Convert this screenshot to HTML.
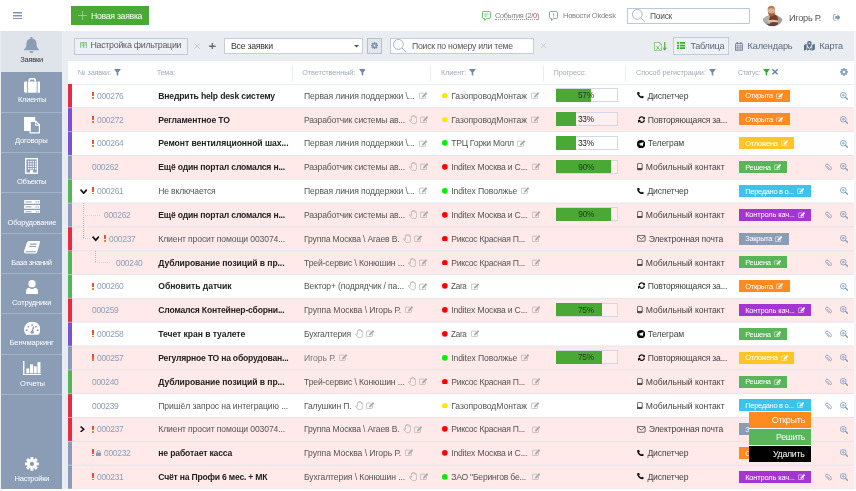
<!DOCTYPE html>
<html lang="ru"><head><meta charset="utf-8"><title>Okdesk — Заявки</title><style>html,body{margin:0;padding:0}body{width:856px;height:491px;overflow:hidden;position:relative;background:#fff;font-family:"Liberation Sans", sans-serif;filter:blur(.3px)}
.b{position:absolute;display:block}.t{position:absolute;white-space:nowrap;display:block;transform-origin:0 50%}</style></head><body>
<div class="b" style="left:0.00px;top:0.00px;width:856.00px;height:31.20px;background:#fff"></div>
<div class="b" style="left:0.00px;top:31.20px;width:856.00px;height:459.80px;background:#e9edf2"></div>
<div class="b" style="left:0.70px;top:31.20px;width:61.30px;height:459.80px;background:#8b9db5"></div>
<div class="b" style="left:0.70px;top:31.20px;width:61.30px;height:40.80px;background:#dfe4eb"></div>
<span class="t" style="left:20.20px;top:55.30px;font-size:7.6px;line-height:10.6px;color:#333;letter-spacing:-0.272px;">Заявки</span>
<svg class="b" style="left:24.40px;top:37.00px;" width="15.00" height="16.10" viewBox="1 0.6 14 15.2" preserveAspectRatio="none"><path d="M8 .6a1 1 0 0 1 1 1v.5c2.300.5 3.700 2.400 3.700 4.900 0 2.700.8 4.300 2.300 5.300v.9H1v-.9c1.500-1 2.300-2.600 2.300-5.300 0-2.500 1.400-4.400 3.700-4.900v-.5a1 1 0 0 1 1-1z" fill="#8b9db5"/><path d="M6.200 14h3.600a1.800 1.800 0 0 1-3.600 0z" fill="#8b9db5"/></svg>
<div class="b" style="left:0.70px;top:111.60px;width:61.30px;height:1.00px;background:#a5b3c7"></div>
<span class="t" style="left:17.50px;top:95.40px;font-size:7.6px;line-height:10.6px;color:#fff;letter-spacing:-0.280px;transform:scaleX(0.9915);">Клиенты</span>
<svg class="b" style="left:23.90px;top:78.00px;" width="16.50" height="14.70" viewBox="0.5 0.2 17 15.3" preserveAspectRatio="none"><path d="M6 3.800V2.300A1.300 1.300 0 0 1 7.300 1h3.400A1.300 1.300 0 0 1 12 2.300V3.800" fill="none" stroke="#fff" stroke-width="1.600"/><path d="M2 3.800H3.500V15.500H2A1.500 1.500 0 0 1 .5 14V5.300A1.500 1.500 0 0 1 2 3.800z" fill="#fff"/><rect x="4.400" y="3.800" width="9.200" height="11.700" fill="#fff"/><path d="M14.500 3.800H16A1.500 1.500 0 0 1 17.500 5.300V14A1.500 1.500 0 0 1 16 15.500H14.500z" fill="#fff"/></svg>
<div class="b" style="left:0.70px;top:151.75px;width:61.30px;height:1.00px;background:#a5b3c7"></div>
<span class="t" style="left:15.00px;top:136.00px;font-size:7.6px;line-height:10.6px;color:#fff;letter-spacing:-0.205px;">Договоры</span>
<svg class="b" style="left:23.90px;top:117.30px;" width="16.10" height="16.60" viewBox="0 0 18 18" preserveAspectRatio="none"><path d="M0 0H12.500V15.200H0z" fill="#fff"/><path d="M6.900 4.600H13.200L17.300 8.700V17.300H6.900z" fill="#8b9db5" stroke="#fff" stroke-width="1.400" stroke-linejoin="round"/><path d="M12.900 4.600V9H17.300" fill="none" stroke="#fff" stroke-width="1.200"/></svg>
<div class="b" style="left:0.70px;top:191.60px;width:61.30px;height:1.00px;background:#a5b3c7"></div>
<span class="t" style="left:17.00px;top:176.50px;font-size:7.6px;line-height:10.6px;color:#fff;letter-spacing:-0.280px;transform:scaleX(0.9960);">Объекты</span>
<svg class="b" style="left:25.20px;top:158.00px;" width="13.20" height="15.90" viewBox="0 0 13 16" preserveAspectRatio="none"><rect x=".7" y=".7" width="11.600" height="14.600" fill="#8b9db5" stroke="#fff" stroke-width="1.400"/><rect x="2.9" y="2.9" width="1.400" height="1.400" fill="#fff"/><rect x="2.9" y="5.3" width="1.400" height="1.400" fill="#fff"/><rect x="2.9" y="7.7" width="1.400" height="1.400" fill="#fff"/><rect x="2.9" y="10.1" width="1.400" height="1.400" fill="#fff"/><rect x="5.2" y="2.9" width="1.400" height="1.400" fill="#fff"/><rect x="5.2" y="5.3" width="1.400" height="1.400" fill="#fff"/><rect x="5.2" y="7.7" width="1.400" height="1.400" fill="#fff"/><rect x="5.2" y="10.1" width="1.400" height="1.400" fill="#fff"/><rect x="7.5" y="2.9" width="1.400" height="1.400" fill="#fff"/><rect x="7.5" y="5.3" width="1.400" height="1.400" fill="#fff"/><rect x="7.5" y="7.7" width="1.400" height="1.400" fill="#fff"/><rect x="7.5" y="10.1" width="1.400" height="1.400" fill="#fff"/><rect x="9.8" y="2.9" width="1.400" height="1.400" fill="#fff"/><rect x="9.8" y="5.3" width="1.400" height="1.400" fill="#fff"/><rect x="9.8" y="7.7" width="1.400" height="1.400" fill="#fff"/><rect x="9.8" y="10.1" width="1.400" height="1.400" fill="#fff"/><rect x="5" y="12.200" width="3" height="3.200" fill="#fff"/></svg>
<div class="b" style="left:0.70px;top:232.60px;width:61.30px;height:1.00px;background:#a5b3c7"></div>
<span class="t" style="left:7.50px;top:217.60px;font-size:7.6px;line-height:10.6px;color:#fff;letter-spacing:-0.242px;">Оборудование</span>
<svg class="b" style="left:23.90px;top:199.50px;" width="16.10" height="13.80" viewBox="0 0 18 15" preserveAspectRatio="none"><rect x="0" y="0.0" width="18" height="4.200" rx=".8" fill="#fff"/><rect x="1.500" y="1.6" width="7" height="1" fill="#8b9db5"/><rect x="13" y="1.4" width="1.300" height="1.300" fill="#8b9db5"/><rect x="15.300" y="1.4" width="1.300" height="1.300" fill="#8b9db5"/><rect x="0" y="5.4" width="18" height="4.200" rx=".8" fill="#fff"/><rect x="1.500" y="7.0" width="7" height="1" fill="#8b9db5"/><rect x="13" y="6.9" width="1.300" height="1.300" fill="#8b9db5"/><rect x="15.300" y="6.9" width="1.300" height="1.300" fill="#8b9db5"/><rect x="0" y="10.8" width="18" height="4.200" rx=".8" fill="#fff"/><rect x="1.500" y="12.4" width="7" height="1" fill="#8b9db5"/><rect x="13" y="12.2" width="1.300" height="1.300" fill="#8b9db5"/><rect x="15.300" y="12.2" width="1.300" height="1.300" fill="#8b9db5"/></svg>
<div class="b" style="left:0.70px;top:272.75px;width:61.30px;height:1.00px;background:#a5b3c7"></div>
<span class="t" style="left:11.25px;top:257.60px;font-size:7.6px;line-height:10.6px;color:#fff;letter-spacing:-0.274px;">База знаний</span>
<svg class="b" style="left:23.90px;top:241.00px;" width="16.10" height="13.60" viewBox="0.5 0.5 17 13.5" preserveAspectRatio="none"><path d="M6 .5H16.300a1.200 1.200 0 0 1 1.100 1.600L14.300 12a1.500 1.500 0 0 1-1.400 1H2.500A2 2 0 0 1 .6 10.400L3.500 2.300A2.600 2.600 0 0 1 6 .5z" fill="#fff"/><path d="M7 3.600h6.800M6.200 6h6.800" stroke="#8b9db5" stroke-width="1.100"/><path d="M2.300 11.200h10.800" stroke="#8b9db5" stroke-width="1"/></svg>
<div class="b" style="left:0.70px;top:312.60px;width:61.30px;height:1.00px;background:#a5b3c7"></div>
<span class="t" style="left:12.00px;top:297.70px;font-size:7.6px;line-height:10.6px;color:#fff;letter-spacing:-0.189px;">Сотрудники</span>
<svg class="b" style="left:25.70px;top:280.00px;" width="12.10" height="14.30" viewBox="0.5 0.3 13 15.2" preserveAspectRatio="none"><circle cx="7" cy="4.200" r="3.900" fill="#fff"/><path d="M.5 15.500V12.500C.5 9.800 2.500 8.600 4 8.600 5 9.500 6 9.800 7 9.800S9 9.500 10 8.600c1.500 0 3.500 1.200 3.500 3.900v3z" fill="#fff"/></svg>
<div class="b" style="left:0.70px;top:353.75px;width:61.30px;height:1.00px;background:#a5b3c7"></div>
<span class="t" style="left:9.50px;top:338.30px;font-size:7.6px;line-height:10.6px;color:#fff;letter-spacing:-0.119px;">Бенчмаркинг</span>
<svg class="b" style="left:23.80px;top:322.00px;" width="16.40" height="12.80" viewBox="0.5 0 17 13.6" preserveAspectRatio="none"><path d="M2.500 13.500A8.500 8.500 0 1 1 15.500 13.500z" fill="#fff"/><circle cx="3.3" cy="8.8" r="1" fill="#8b9db5"/><circle cx="5.0" cy="4.9" r="1" fill="#8b9db5"/><circle cx="9.0" cy="3.1" r="1" fill="#8b9db5"/><circle cx="13.0" cy="4.9" r="1" fill="#8b9db5"/><circle cx="14.7" cy="8.8" r="1" fill="#8b9db5"/><path d="M9 10.800 10.500 4.800" stroke="#8b9db5" stroke-width="1.400"/><circle cx="9" cy="10.800" r="1.700" fill="#8b9db5"/></svg>
<div class="b" style="left:0.70px;top:393.90px;width:61.30px;height:1.00px;background:#a5b3c7"></div>
<span class="t" style="left:20.00px;top:378.70px;font-size:7.6px;line-height:10.6px;color:#fff;letter-spacing:-0.280px;">Отчеты</span>
<svg class="b" style="left:22.60px;top:360.80px;" width="18.60" height="14.40" viewBox="0 0 18 15" preserveAspectRatio="none"><path d="M.7 0V14.200H18" fill="none" stroke="#fff" stroke-width="1.400"/><rect x="3.200" y="7.800" width="2.900" height="5" fill="#fff"/><rect x="6.800" y="3.500" width="2.900" height="9.300" fill="#fff"/><rect x="10.400" y="5.500" width="2.900" height="7.300" fill="#fff"/><rect x="14" y="1.200" width="2.900" height="11.600" fill="#fff"/></svg>
<svg class="b" style="left:25.00px;top:457.00px;" width="13.80" height="13.80" viewBox="0 0 16 16" preserveAspectRatio="none"><rect x="6.300" y="0" width="3.400" height="16" rx=".6" fill="#fff" transform="rotate(0 8 8)"/><rect x="6.300" y="0" width="3.400" height="16" rx=".6" fill="#fff" transform="rotate(45 8 8)"/><rect x="6.300" y="0" width="3.400" height="16" rx=".6" fill="#fff" transform="rotate(90 8 8)"/><rect x="6.300" y="0" width="3.400" height="16" rx=".6" fill="#fff" transform="rotate(135 8 8)"/><circle cx="8" cy="8" r="5.700" fill="#fff"/><circle cx="8" cy="8" r="2.500" fill="#8b9db5"/></svg>
<span class="t" style="left:14.50px;top:474.40px;font-size:7.6px;line-height:10.6px;color:#fff;letter-spacing:-0.278px;">Настройки</span>
<svg class="b" style="left:13.10px;top:11.70px;" width="9.30" height="7.50" viewBox="0 0 9 7" preserveAspectRatio="none"><path d="M0 .8H9M0 3.500H9M0 6.200H9" stroke="#8395ae" stroke-width="1.400"/></svg>
<div class="b" style="left:71.20px;top:5.60px;width:77.60px;height:19.10px;background:#4aa934"></div>
<svg class="b" style="left:78.00px;top:10.70px;" width="9.00" height="9.00" viewBox="0 0 10 10" preserveAspectRatio="none"><path d="M5 0V10M0 5H10" stroke="#b9e3ad" stroke-width=".7"/></svg>
<span class="t" style="left:91.00px;top:9.70px;font-size:8.7px;line-height:12.2px;color:#fff;letter-spacing:-0.280px;">Новая заявка</span>
<svg class="b" style="left:481.00px;top:11.00px;" width="11.00" height="10.00" viewBox="0 0 11 10" preserveAspectRatio="none"><path d="M2.500 .5H8.500a1 1 0 0 1 1 1V6.500a1 1 0 0 1-1 1H5.700L3.500 9.500V7.500H2.500a1 1 0 0 1-1-1V1.500a1 1 0 0 1 1-1z" fill="none" stroke="#6fc272" stroke-width="1"/><path d="M3.300 3H7.700M3.300 5H6.500" stroke="#6fc272" stroke-width=".9"/></svg>
<span class="t" style="left:495.30px;top:10.90px;font-size:7.6px;line-height:10.6px;color:#808080;letter-spacing:-0.280px;transform:scaleX(0.9702);">События (2/<span style="color:#e33">0</span>)</span>
<div class="b" style="left:495.30px;top:19.00px;width:44.10px;height:1.00px;border-top:1px dotted #999;height:0"></div>
<svg class="b" style="left:548.00px;top:11.00px;" width="11.00" height="10.00" viewBox="0 0 11 10" preserveAspectRatio="none"><path d="M2.500 .5H8.500a1 1 0 0 1 1 1V6.500a1 1 0 0 1-1 1H5.700L3.500 9.500V7.500H2.500a1 1 0 0 1-1-1V1.500a1 1 0 0 1 1-1z" fill="none" stroke="#8da2c0" stroke-width="1"/><path d="M5.500 2.200V4.700M5.500 5.500V6.400" stroke="#8da2c0" stroke-width="1.100"/></svg>
<span class="t" style="left:562.70px;top:10.90px;font-size:7.6px;line-height:10.6px;color:#808080;letter-spacing:-0.280px;transform:scaleX(0.9863);">Новости Okdesk</span>
<div class="b" style="left:627.20px;top:7.50px;width:122.80px;height:16.80px;background:#fff;border:1px solid #b9c9dc;box-sizing:border-box"></div>
<svg class="b" style="left:631.60px;top:8.50px;" width="13.70" height="13.70" viewBox="0.5 0.5 15.4 15.4" preserveAspectRatio="none"><circle cx="6.500" cy="6.500" r="5.500" fill="none" stroke="#8b9db5" stroke-width="0.85"/><path d="M10.500 10.500 15.500 15.500" stroke="#8b9db5" stroke-width="0.85"/></svg>
<span class="t" style="left:650.00px;top:10.20px;font-size:8.6px;line-height:12.0px;color:#555;letter-spacing:-0.280px;transform:scaleX(0.9809);">Поиск</span>
<svg class="b" style="left:761.90px;top:5.30px;" width="21.40" height="21.30" viewBox="0 0 21.4 21.3" preserveAspectRatio="none"><clipPath id="av"><circle cx="10.700" cy="10.650" r="10.650"/></clipPath><g clip-path="url(#av)"><rect width="21.400" height="21.300" fill="#fff"/><ellipse cx="10.600" cy="17" rx="10.600" ry="7.200" fill="#a39c9a"/><path d="M1 14C4 11.500 6.500 10.800 8 10.500L7 16 2 17z" fill="#b5afad"/><ellipse cx="11.600" cy="14.700" rx="4.400" ry="5.700" fill="#7d3b2b"/><ellipse cx="10.600" cy="16.300" rx="5.600" ry="1.500" fill="#e2bfa9"/><ellipse cx="12" cy="18.800" rx="4" ry="1.800" fill="#7d3b2b"/><ellipse cx="8.500" cy="20" rx="5" ry="1.100" fill="#4a4a50"/><ellipse cx="9.400" cy="5.400" rx="3.800" ry="4.700" fill="#deb091"/><path d="M5.600 4.800C5.300 -.6 13.300 -.6 13.200 4.800 11.800 2.800 7.300 2.800 5.600 4.800z" fill="#b48058"/><path d="M5.900 6.800C6.300 13 12.700 13 13 6.800 11.800 9 7.300 9 5.900 6.800z" fill="#a3623f"/></g></svg>
<span class="t" style="left:789.40px;top:11.10px;font-size:9.4px;line-height:13.2px;color:#555;letter-spacing:-0.280px;transform:scaleX(0.9813);">Игорь Р.</span>
<svg class="b" style="left:832.60px;top:14.00px;" width="7.60" height="6.80" viewBox="0 0 16 14" preserveAspectRatio="none"><path d="M6 1H3.500A2.500 2.500 0 0 0 1 3.500V10.500A2.500 2.500 0 0 0 3.500 13H6" fill="none" stroke="#7f9abb" stroke-width="2.200" opacity=".75"/><path d="M9.300 .8 16 7 9.300 13.200V9.700H4.800V4.300H9.300z" fill="#7f9abb"/></svg>
<div class="b" style="left:74.10px;top:37.80px;width:113.70px;height:16.90px;background:#edf0f4;border:1px solid #c0cad8;box-sizing:border-box"></div>
<svg class="b" style="left:80.00px;top:41.50px;" width="7.00" height="6.70" viewBox="0 0 10 10" preserveAspectRatio="none"><rect x=".6" y=".6" width="8.800" height="8.800" rx="1" fill="none" stroke="#6cc070" stroke-width="1.200"/><path d="M5 2.500V8.500M2 5.500H8M1 2.800H9" stroke="#6cc070" stroke-width="1.100"/></svg>
<span class="t" style="left:90.40px;top:39.45px;font-size:8.9px;line-height:12.5px;color:#606060;letter-spacing:-0.280px;">Настройка фильтрации</span>
<svg class="b" style="left:194.00px;top:43.00px;" width="6.20" height="6.20" viewBox="0.5 0.5 9 9" preserveAspectRatio="none"><path d="M1 1 9 9M9 1 1 9" stroke="#b5bfcc" stroke-width="1.1"/></svg>
<svg class="b" style="left:209.00px;top:42.90px;" width="6.60" height="6.50" viewBox="0 0 10 10" preserveAspectRatio="none"><path d="M5 0V10M0 5H10" stroke="#6a6a6a" stroke-width="2"/></svg>
<div class="b" style="left:224.00px;top:37.50px;width:139.30px;height:16.80px;background:#fff;border:1px solid #c3cedc;box-sizing:border-box"></div>
<span class="t" style="left:231.00px;top:39.85px;font-size:8.8px;line-height:12.3px;color:#333;letter-spacing:-0.280px;transform:scaleX(0.9956);">Все заявки</span>
<svg class="b" style="left:353.50px;top:45.00px;" width="5.00" height="2.50" viewBox="0 0 10 5" preserveAspectRatio="none"><path d="M0 0H10L5 5z" fill="#555"/></svg>
<div class="b" style="left:366.70px;top:37.50px;width:15.80px;height:16.80px;background:#e2e7ee;border:1px solid #b3c0d0;box-sizing:border-box"></div>
<svg class="b" style="left:370.90px;top:42.20px;" width="7.10" height="7.10" viewBox="0 0 16 16" preserveAspectRatio="none"><rect x="6.300" y="0" width="3.400" height="16" rx=".6" fill="#8093ad" transform="rotate(0 8 8)"/><rect x="6.300" y="0" width="3.400" height="16" rx=".6" fill="#8093ad" transform="rotate(45 8 8)"/><rect x="6.300" y="0" width="3.400" height="16" rx=".6" fill="#8093ad" transform="rotate(90 8 8)"/><rect x="6.300" y="0" width="3.400" height="16" rx=".6" fill="#8093ad" transform="rotate(135 8 8)"/><circle cx="8" cy="8" r="5.700" fill="#8093ad"/><circle cx="8" cy="8" r="2.500" fill="#e2e7ee"/></svg>
<div class="b" style="left:389.70px;top:37.50px;width:144.60px;height:16.80px;background:#fff;border:1px solid #c3cedc;box-sizing:border-box"></div>
<svg class="b" style="left:392.70px;top:39.00px;" width="13.80" height="13.80" viewBox="0.5 0.5 15.4 15.4" preserveAspectRatio="none"><circle cx="6.500" cy="6.500" r="5.500" fill="none" stroke="#8b9db5" stroke-width="0.85"/><path d="M10.500 10.500 15.500 15.500" stroke="#8b9db5" stroke-width="0.85"/></svg>
<span class="t" style="left:411.50px;top:39.85px;font-size:8.8px;line-height:12.3px;color:#555;letter-spacing:-0.280px;transform:scaleX(0.9906);">Поиск по номеру или теме</span>
<svg class="b" style="left:540.50px;top:43.30px;" width="5.20" height="5.20" viewBox="0.5 0.5 9 9" preserveAspectRatio="none"><path d="M1 1 9 9M9 1 1 9" stroke="#b5bfcc" stroke-width="1.1"/></svg>
<svg class="b" style="left:654.00px;top:41.50px;" width="13.00" height="9.10" viewBox="0 0 26 20" preserveAspectRatio="none"><path d="M1 1H11L15 5V19H1z" fill="#fff" stroke="#55b544" stroke-width="1.400"/><path d="M11 1V5H15" fill="none" stroke="#55b544" stroke-width="1.200"/><path d="M4.500 8 11 17M11 8 4.500 17" stroke="#55b544" stroke-width="1.800"/><path d="M21.500 0V14" stroke="#55b544" stroke-width="2.600"/><path d="M17 12.500H26L21.500 19.500z" fill="#55b544"/></svg>
<div class="b" style="left:673.10px;top:37.30px;width:55.90px;height:18.10px;background:#edf0f4;border:1px solid #c3cdd9;box-sizing:border-box"></div>
<svg class="b" style="left:676.60px;top:42.20px;" width="8.90" height="7.20" viewBox="0 0 12 10" preserveAspectRatio="none"><path d="M0 1.300H2.700M0 5H2.700M0 8.700H2.700M3.800 1.300H12M3.800 5H12M3.800 8.700H12" stroke="#3cb02c" stroke-width="2.500"/></svg>
<span class="t" style="left:690.40px;top:39.85px;font-size:9.1px;line-height:12.7px;color:#5a6a80;letter-spacing:-0.265px;">Таблица</span>
<svg class="b" style="left:735.00px;top:41.70px;" width="8.00" height="9.30" viewBox="0 0 14 15" preserveAspectRatio="none"><rect x=".8" y="2.500" width="12.400" height="11.700" rx="1" fill="none" stroke="#6d7f96" stroke-width="1.500"/><path d="M.8 5.800H13.200M4.800 5.800V14M9.200 5.800V14M1 8.600H13M1 11.400H13" stroke="#6d7f96" stroke-width="1"/><path d="M4 0V3.800M10 0V3.800" stroke="#6d7f96" stroke-width="2"/></svg>
<span class="t" style="left:747.50px;top:39.75px;font-size:9.2px;line-height:12.9px;color:#5a6a80;letter-spacing:-0.153px;">Календарь</span>
<svg class="b" style="left:804.20px;top:41.30px;" width="10.80" height="9.70" viewBox="0 0 18 15" preserveAspectRatio="none"><path d="M0 6 4.300 4.300V13.300L0 15z" fill="#566b85"/><path d="M13.700 6 18 4.300V13.300L13.700 15z" fill="#566b85"/><path d="M5.200 8.500 6.500 11.800H11.500L12.800 8.500V15L9 13.300 5.200 15z" fill="#566b85"/><path d="M9 0A3.800 3.800 0 0 1 12.800 3.800C12.800 6.500 9 11 9 11S5.200 6.500 5.200 3.800A3.800 3.800 0 0 1 9 0z" fill="#566b85"/><circle cx="9" cy="3.800" r="1.400" fill="#e9edf2"/></svg>
<span class="t" style="left:819.50px;top:39.85px;font-size:9.1px;line-height:12.7px;color:#5a6a80;letter-spacing:-0.219px;">Карта</span>
<div class="b" style="left:854.00px;top:31.20px;width:2.00px;height:459.80px;background:#f3f5f8"></div>
<div class="b" style="left:68.00px;top:61.00px;width:785.50px;height:430.00px;background:#fff"></div>
<span class="t" style="left:78.00px;top:67.60px;font-size:7.3px;line-height:10.2px;color:#a3abb8;letter-spacing:-0.182px;">№ заявки:</span>
<svg class="b" style="left:113.70px;top:68.80px;" width="6.90" height="7.00" viewBox="0.5 1 15 14" preserveAspectRatio="none"><path d="M.5 1H15.500L9.700 7.800V15L6.300 12.500V7.800z" fill="#7088a8"/></svg>
<span class="t" style="left:156.75px;top:67.60px;font-size:7.3px;line-height:10.2px;color:#a3abb8;letter-spacing:-0.244px;">Тема:</span>
<span class="t" style="left:302.25px;top:67.60px;font-size:7.3px;line-height:10.2px;color:#a3abb8;letter-spacing:-0.081px;">Ответственный:</span>
<svg class="b" style="left:358.50px;top:68.80px;" width="6.90" height="7.00" viewBox="0.5 1 15 14" preserveAspectRatio="none"><path d="M.5 1H15.500L9.700 7.800V15L6.300 12.500V7.800z" fill="#7088a8"/></svg>
<span class="t" style="left:441.00px;top:67.60px;font-size:7.3px;line-height:10.2px;color:#a3abb8;letter-spacing:-0.114px;">Клиент:</span>
<svg class="b" style="left:469.20px;top:68.80px;" width="6.90" height="7.00" viewBox="0.5 1 15 14" preserveAspectRatio="none"><path d="M.5 1H15.500L9.700 7.800V15L6.300 12.500V7.800z" fill="#7088a8"/></svg>
<span class="t" style="left:553.50px;top:67.60px;font-size:7.3px;line-height:10.2px;color:#a3abb8;letter-spacing:-0.108px;">Прогресс:</span>
<span class="t" style="left:636.00px;top:67.60px;font-size:7.3px;line-height:10.2px;color:#a3abb8;letter-spacing:-0.097px;">Способ регистрации:</span>
<svg class="b" style="left:709.00px;top:68.80px;" width="6.90" height="7.00" viewBox="0.5 1 15 14" preserveAspectRatio="none"><path d="M.5 1H15.500L9.700 7.800V15L6.300 12.500V7.800z" fill="#7088a8"/></svg>
<span class="t" style="left:737.50px;top:67.60px;font-size:7.3px;line-height:10.2px;color:#a3abb8;letter-spacing:-0.280px;transform:scaleX(0.9510);">Статус:</span>
<svg class="b" style="left:763.20px;top:68.50px;" width="6.90" height="7.00" viewBox="0.5 1 15 14" preserveAspectRatio="none"><path d="M.5 1H15.500L9.700 7.800V15L6.300 12.500V7.800z" fill="#3aa33a"/></svg>
<svg class="b" style="left:772.40px;top:69.00px;" width="6.00" height="5.60" viewBox="0.5 0.5 9 9" preserveAspectRatio="none"><path d="M1 1 9 9M9 1 1 9" stroke="#5b84ad" stroke-width="2.1"/></svg>
<svg class="b" style="left:840.00px;top:68.00px;" width="8.00" height="7.80" viewBox="0 0 16 16" preserveAspectRatio="none"><rect x="6.300" y="0" width="3.400" height="16" rx=".6" fill="#8aa1c0" transform="rotate(0 8 8)"/><rect x="6.300" y="0" width="3.400" height="16" rx=".6" fill="#8aa1c0" transform="rotate(45 8 8)"/><rect x="6.300" y="0" width="3.400" height="16" rx=".6" fill="#8aa1c0" transform="rotate(90 8 8)"/><rect x="6.300" y="0" width="3.400" height="16" rx=".6" fill="#8aa1c0" transform="rotate(135 8 8)"/><circle cx="8" cy="8" r="5.700" fill="#8aa1c0"/><circle cx="8" cy="8" r="2.500" fill="#fff"/></svg>
<div class="b" style="left:291.50px;top:64.50px;width:1.00px;height:16.00px;background:#eaedf2"></div>
<div class="b" style="left:430.00px;top:64.50px;width:1.00px;height:16.00px;background:#eaedf2"></div>
<div class="b" style="left:542.50px;top:64.50px;width:1.00px;height:16.00px;background:#eaedf2"></div>
<div class="b" style="left:624.50px;top:64.50px;width:1.00px;height:16.00px;background:#eaedf2"></div>
<div class="b" style="left:68.00px;top:83.50px;width:786.00px;height:0.80px;background:#e9edf2"></div>
<div class="b" style="left:68.00px;top:83.80px;width:4.00px;height:23.83px;background:#e82944"></div>
<div class="b" style="left:92.30px;top:92.00px;width:1.80px;height:4.40px;background:linear-gradient(#f23a2e,#f6602a);border-radius:.3px"></div>
<div class="b" style="left:92.30px;top:97.30px;width:1.80px;height:1.60px;background:#fa7a2c"></div>
<span class="t" style="left:96.60px;top:89.80px;font-size:8.6px;line-height:12.0px;color:#8c9eb7;letter-spacing:-0.280px;transform:scaleX(0.9812);">000276</span>
<span class="t" style="left:158.30px;top:89.80px;font-size:8.6px;line-height:12.0px;color:#222;font-weight:bold;letter-spacing:-0.162px;">Внедрить help desk систему</span>
<span class="t" style="left:304.00px;top:89.80px;font-size:8.6px;line-height:12.0px;color:#555;letter-spacing:-0.112px;">Первая линия поддержки \...</span>
<svg class="b" style="left:419.40px;top:91.90px;" width="8.40" height="7.00" viewBox="0 0.3 17 13.7" preserveAspectRatio="none"><path d="M13 8.500V11.500A1.800 1.800 0 0 1 11.200 13.300H2.500A1.800 1.800 0 0 1 .7 11.500V4.300A1.800 1.800 0 0 1 2.500 2.500H9" fill="none" stroke="#a9a9a9" stroke-width="1.350" stroke-linecap="round"/><path d="M6.500 8 14 .5 16.800 3.300 9.300 10.800 6 11.300z" fill="#a9a9a9"/></svg>
<svg class="b" style="left:442.30px;top:92.75px;" width="5.70" height="5.70" viewBox="0 0 10 10" preserveAspectRatio="none"><circle cx="5" cy="5" r="5" fill="#ffe800"/></svg>
<span class="t" style="left:451.20px;top:89.80px;font-size:8.6px;line-height:12.0px;color:#555;letter-spacing:-0.070px;">ГазопроводМонтаж</span>
<svg class="b" style="left:530.50px;top:91.90px;" width="8.40" height="7.00" viewBox="0 0.3 17 13.7" preserveAspectRatio="none"><path d="M13 8.500V11.500A1.800 1.800 0 0 1 11.200 13.300H2.500A1.800 1.800 0 0 1 .7 11.500V4.300A1.800 1.800 0 0 1 2.500 2.500H9" fill="none" stroke="#a9a9a9" stroke-width="1.350" stroke-linecap="round"/><path d="M6.500 8 14 .5 16.800 3.300 9.300 10.800 6 11.300z" fill="#a9a9a9"/></svg>
<div class="b" style="left:555.50px;top:88.30px;width:62.00px;height:13.80px;background:rgba(255,255,255,.3);border:1px solid #d0dae6;box-sizing:border-box"></div>
<div class="b" style="left:555.60px;top:88.50px;width:35.23px;height:13.40px;background:#4aa934"></div>
<span class="t" style="left:578.45px;top:90.20px;font-size:8.4px;line-height:11.8px;color:#1f3a18;letter-spacing:-0.280px;transform:scaleX(0.9858);">57%</span>
<svg class="b" style="left:637.40px;top:92.20px;" width="6.60" height="6.40" viewBox="1 1 14 14" preserveAspectRatio="none"><path d="M3.200 1.200 5.600 1 7 4.400 5.400 5.800C6.300 7.800 8.200 9.700 10.200 10.600L11.600 9 15 10.400 14.800 12.800C14.600 14.200 13.400 15 12 14.800 6.200 14 2 9.800 1.200 4 1 2.600 1.800 1.400 3.200 1.200z" fill="#111"/></svg>
<span class="t" style="left:647.40px;top:89.80px;font-size:8.6px;line-height:12.0px;color:#444;letter-spacing:-0.127px;">Диспетчер</span>
<div class="b" style="left:738.50px;top:89.60px;width:51.50px;height:12.00px;background:#ff8a1f"></div>
<span class="t" style="left:745.20px;top:91.25px;font-size:7.5px;line-height:10.5px;color:#fff;letter-spacing:-0.270px;">Открыта</span>
<svg class="b" style="left:776.15px;top:92.70px;" width="7.30" height="5.90" viewBox="0 0.3 17 13.7" preserveAspectRatio="none"><path d="M13 8.500V11.500A1.800 1.800 0 0 1 11.200 13.300H2.500A1.800 1.800 0 0 1 .7 11.500V4.300A1.800 1.800 0 0 1 2.500 2.500H9" fill="none" stroke="#fff" stroke-width="1.350" stroke-linecap="round"/><path d="M6.500 8 14 .5 16.800 3.300 9.300 10.800 6 11.300z" fill="#fff"/></svg>
<svg class="b" style="left:839.80px;top:92.00px;" width="8.20" height="7.90" viewBox="0.4 0.4 15.9 15.9" preserveAspectRatio="none"><circle cx="6.800" cy="6.800" r="5.600" fill="none" stroke="#7b99be" stroke-width="1.600"/><path d="M11.200 11.200 15 15" stroke="#7b99be" stroke-width="2.600" stroke-linecap="round"/><path d="M4 6.800H9.600M6.800 4V9.600" stroke="#7b99be" stroke-width="1.500"/></svg>
<div class="b" style="left:72.00px;top:107.63px;width:782.00px;height:23.83px;background:#ffe9e9"></div>
<div class="b" style="left:68.00px;top:107.63px;width:4.00px;height:23.83px;background:#7a52d6"></div>
<div class="b" style="left:92.30px;top:115.83px;width:1.80px;height:4.40px;background:linear-gradient(#f23a2e,#f6602a);border-radius:.3px"></div>
<div class="b" style="left:92.30px;top:121.13px;width:1.80px;height:1.60px;background:#fa7a2c"></div>
<span class="t" style="left:96.60px;top:113.63px;font-size:8.6px;line-height:12.0px;color:#8c9eb7;letter-spacing:-0.280px;transform:scaleX(0.9812);">000272</span>
<span class="t" style="left:158.30px;top:113.63px;font-size:8.6px;line-height:12.0px;color:#222;font-weight:bold;letter-spacing:-0.158px;">Регламентное ТО</span>
<span class="t" style="left:304.00px;top:113.63px;font-size:8.6px;line-height:12.0px;color:#555;letter-spacing:-0.180px;">Разработчик системы ав...</span>
<svg class="b" style="left:408.70px;top:114.63px;" width="8.10" height="9.20" viewBox="0.2 0.2 14.6 16.7" preserveAspectRatio="none"><path d="M4.500 10V3.500a1.200 1.200 0 0 1 2.400 0V2a1.200 1.200 0 0 1 2.400 0v.8a1.200 1.200 0 0 1 2.400 0V4.800a1.200 1.200 0 0 1 2.400 0V11c0 3.300-2 5.200-5 5.200-2.500 0-3.700-1-4.800-3L1 10.200c-.6-1.200.9-2.200 1.800-1z" fill="none" stroke="#a9a9a9" stroke-width="1.250" stroke-linejoin="round"/></svg>
<svg class="b" style="left:419.50px;top:115.73px;" width="8.40" height="7.00" viewBox="0 0.3 17 13.7" preserveAspectRatio="none"><path d="M13 8.500V11.500A1.800 1.800 0 0 1 11.200 13.300H2.500A1.800 1.800 0 0 1 .7 11.500V4.300A1.800 1.800 0 0 1 2.500 2.500H9" fill="none" stroke="#a9a9a9" stroke-width="1.350" stroke-linecap="round"/><path d="M6.500 8 14 .5 16.800 3.300 9.300 10.800 6 11.300z" fill="#a9a9a9"/></svg>
<svg class="b" style="left:442.30px;top:116.58px;" width="5.70" height="5.70" viewBox="0 0 10 10" preserveAspectRatio="none"><circle cx="5" cy="5" r="5" fill="#ffe800"/></svg>
<span class="t" style="left:451.20px;top:113.63px;font-size:8.6px;line-height:12.0px;color:#555;letter-spacing:-0.070px;">ГазопроводМонтаж</span>
<svg class="b" style="left:530.50px;top:115.73px;" width="8.40" height="7.00" viewBox="0 0.3 17 13.7" preserveAspectRatio="none"><path d="M13 8.500V11.500A1.800 1.800 0 0 1 11.200 13.300H2.500A1.800 1.800 0 0 1 .7 11.500V4.300A1.800 1.800 0 0 1 2.500 2.500H9" fill="none" stroke="#a9a9a9" stroke-width="1.350" stroke-linecap="round"/><path d="M6.500 8 14 .5 16.800 3.300 9.300 10.800 6 11.300z" fill="#a9a9a9"/></svg>
<div class="b" style="left:555.50px;top:112.13px;width:62.00px;height:13.80px;background:rgba(255,255,255,.3);border:1px solid #d0dae6;box-sizing:border-box"></div>
<div class="b" style="left:555.60px;top:112.33px;width:20.39px;height:13.40px;background:#4aa934"></div>
<span class="t" style="left:578.30px;top:114.03px;font-size:8.4px;line-height:11.8px;color:#222;letter-spacing:-0.280px;transform:scaleX(0.9858);">33%</span>
<svg class="b" style="left:637.60px;top:115.63px;" width="7.50" height="7.20" viewBox="0 0.8 16 14.4" preserveAspectRatio="none"><path d="M2.420 7.510A5.600 5.600 0 0 1 12.850 5.200" fill="none" stroke="#111" stroke-width="2.500"/><path d="M13.580 8.490A5.600 5.600 0 0 1 3.150 10.800" fill="none" stroke="#111" stroke-width="2.500"/><path d="M16 1V7.400H9.600z" fill="#111"/><path d="M0 15V8.600H6.400z" fill="#111"/></svg>
<span class="t" style="left:647.70px;top:113.63px;font-size:8.6px;line-height:12.0px;color:#444;letter-spacing:-0.209px;">Повторяющаяся за...</span>
<div class="b" style="left:738.50px;top:113.43px;width:51.50px;height:12.00px;background:#ff8a1f"></div>
<span class="t" style="left:745.20px;top:115.08px;font-size:7.5px;line-height:10.5px;color:#fff;letter-spacing:-0.270px;">Открыта</span>
<svg class="b" style="left:776.15px;top:116.53px;" width="7.30" height="5.90" viewBox="0 0.3 17 13.7" preserveAspectRatio="none"><path d="M13 8.500V11.500A1.800 1.800 0 0 1 11.200 13.300H2.500A1.800 1.800 0 0 1 .7 11.500V4.300A1.800 1.800 0 0 1 2.500 2.500H9" fill="none" stroke="#fff" stroke-width="1.350" stroke-linecap="round"/><path d="M6.500 8 14 .5 16.800 3.300 9.300 10.800 6 11.300z" fill="#fff"/></svg>
<svg class="b" style="left:839.80px;top:115.83px;" width="8.20" height="7.90" viewBox="0.4 0.4 15.9 15.9" preserveAspectRatio="none"><circle cx="6.800" cy="6.800" r="5.600" fill="none" stroke="#7b99be" stroke-width="1.600"/><path d="M11.200 11.200 15 15" stroke="#7b99be" stroke-width="2.600" stroke-linecap="round"/><path d="M4 6.800H9.600M6.800 4V9.600" stroke="#7b99be" stroke-width="1.500"/></svg>
<div class="b" style="left:68.00px;top:131.46px;width:4.00px;height:23.83px;background:#7a52d6"></div>
<div class="b" style="left:92.30px;top:139.66px;width:1.80px;height:4.40px;background:linear-gradient(#f23a2e,#f6602a);border-radius:.3px"></div>
<div class="b" style="left:92.30px;top:144.96px;width:1.80px;height:1.60px;background:#fa7a2c"></div>
<span class="t" style="left:96.60px;top:137.46px;font-size:8.6px;line-height:12.0px;color:#8c9eb7;letter-spacing:-0.280px;transform:scaleX(0.9812);">000264</span>
<span class="t" style="left:158.30px;top:137.46px;font-size:8.6px;line-height:12.0px;color:#222;font-weight:bold;letter-spacing:-0.049px;">Ремонт вентиляционной шах...</span>
<span class="t" style="left:304.00px;top:137.46px;font-size:8.6px;line-height:12.0px;color:#555;letter-spacing:-0.112px;">Первая линия поддержки \...</span>
<svg class="b" style="left:419.40px;top:139.56px;" width="8.40" height="7.00" viewBox="0 0.3 17 13.7" preserveAspectRatio="none"><path d="M13 8.500V11.500A1.800 1.800 0 0 1 11.200 13.300H2.500A1.800 1.800 0 0 1 .7 11.500V4.300A1.800 1.800 0 0 1 2.500 2.500H9" fill="none" stroke="#a9a9a9" stroke-width="1.350" stroke-linecap="round"/><path d="M6.500 8 14 .5 16.800 3.300 9.300 10.800 6 11.300z" fill="#a9a9a9"/></svg>
<svg class="b" style="left:442.30px;top:140.41px;" width="5.70" height="5.70" viewBox="0 0 10 10" preserveAspectRatio="none"><circle cx="5" cy="5" r="5" fill="#00ee00"/></svg>
<span class="t" style="left:451.20px;top:137.46px;font-size:8.6px;line-height:12.0px;color:#555;letter-spacing:-0.260px;">ТРЦ Горки Молл</span>
<svg class="b" style="left:517.25px;top:139.56px;" width="8.40" height="7.00" viewBox="0 0.3 17 13.7" preserveAspectRatio="none"><path d="M13 8.500V11.500A1.800 1.800 0 0 1 11.200 13.300H2.500A1.800 1.800 0 0 1 .7 11.500V4.300A1.800 1.800 0 0 1 2.500 2.500H9" fill="none" stroke="#a9a9a9" stroke-width="1.350" stroke-linecap="round"/><path d="M6.500 8 14 .5 16.800 3.300 9.300 10.800 6 11.300z" fill="#a9a9a9"/></svg>
<div class="b" style="left:555.50px;top:135.96px;width:62.00px;height:13.80px;background:rgba(255,255,255,.3);border:1px solid #d0dae6;box-sizing:border-box"></div>
<div class="b" style="left:555.60px;top:136.16px;width:20.39px;height:13.40px;background:#4aa934"></div>
<span class="t" style="left:578.30px;top:137.86px;font-size:8.4px;line-height:11.8px;color:#222;letter-spacing:-0.280px;transform:scaleX(0.9858);">33%</span>
<svg class="b" style="left:637.10px;top:139.66px;" width="8.20" height="8.20" viewBox="0.3 0.3 15.4 15.4" preserveAspectRatio="none"><circle cx="8" cy="8" r="7.700" fill="#0a0a0a"/><path d="M3 7.800 12.500 4 11 12 8.200 10 6.800 11.400 6.600 9z" fill="#fff"/></svg>
<span class="t" style="left:647.70px;top:137.46px;font-size:8.6px;line-height:12.0px;color:#444;letter-spacing:-0.170px;">Телеграм</span>
<div class="b" style="left:738.50px;top:137.26px;width:55.95px;height:12.00px;background:#ffc526"></div>
<span class="t" style="left:745.20px;top:138.91px;font-size:7.5px;line-height:10.5px;color:#fff;letter-spacing:-0.332px;">Отложена</span>
<svg class="b" style="left:780.90px;top:140.36px;" width="7.30" height="5.90" viewBox="0 0.3 17 13.7" preserveAspectRatio="none"><path d="M13 8.500V11.500A1.800 1.800 0 0 1 11.200 13.300H2.500A1.800 1.800 0 0 1 .7 11.500V4.300A1.800 1.800 0 0 1 2.500 2.500H9" fill="none" stroke="#fff" stroke-width="1.350" stroke-linecap="round"/><path d="M6.500 8 14 .5 16.800 3.300 9.300 10.800 6 11.300z" fill="#fff"/></svg>
<svg class="b" style="left:839.80px;top:139.66px;" width="8.20" height="7.90" viewBox="0.4 0.4 15.9 15.9" preserveAspectRatio="none"><circle cx="6.800" cy="6.800" r="5.600" fill="none" stroke="#7b99be" stroke-width="1.600"/><path d="M11.200 11.200 15 15" stroke="#7b99be" stroke-width="2.600" stroke-linecap="round"/><path d="M4 6.800H9.600M6.800 4V9.600" stroke="#7b99be" stroke-width="1.500"/></svg>
<div class="b" style="left:72.00px;top:155.29px;width:782.00px;height:23.83px;background:#ffe9e9"></div>
<div class="b" style="left:68.00px;top:155.29px;width:4.00px;height:23.83px;background:#8b9db5"></div>
<span class="t" style="left:91.75px;top:161.29px;font-size:8.6px;line-height:12.0px;color:#8c9eb7;letter-spacing:-0.280px;transform:scaleX(0.9812);">000262</span>
<span class="t" style="left:158.30px;top:161.29px;font-size:8.6px;line-height:12.0px;color:#222;font-weight:bold;letter-spacing:-0.189px;">Ещё один портал сломался н...</span>
<span class="t" style="left:304.00px;top:161.29px;font-size:8.6px;line-height:12.0px;color:#555;letter-spacing:-0.180px;">Разработчик системы ав...</span>
<svg class="b" style="left:408.70px;top:162.29px;" width="8.10" height="9.20" viewBox="0.2 0.2 14.6 16.7" preserveAspectRatio="none"><path d="M4.500 10V3.500a1.200 1.200 0 0 1 2.400 0V2a1.200 1.200 0 0 1 2.400 0v.8a1.200 1.200 0 0 1 2.400 0V4.800a1.200 1.200 0 0 1 2.400 0V11c0 3.300-2 5.200-5 5.200-2.500 0-3.700-1-4.800-3L1 10.200c-.6-1.200.9-2.200 1.800-1z" fill="none" stroke="#a9a9a9" stroke-width="1.250" stroke-linejoin="round"/></svg>
<svg class="b" style="left:419.50px;top:163.39px;" width="8.40" height="7.00" viewBox="0 0.3 17 13.7" preserveAspectRatio="none"><path d="M13 8.500V11.500A1.800 1.800 0 0 1 11.200 13.300H2.500A1.800 1.800 0 0 1 .7 11.500V4.300A1.800 1.800 0 0 1 2.500 2.500H9" fill="none" stroke="#a9a9a9" stroke-width="1.350" stroke-linecap="round"/><path d="M6.500 8 14 .5 16.800 3.300 9.300 10.800 6 11.300z" fill="#a9a9a9"/></svg>
<svg class="b" style="left:442.30px;top:164.24px;" width="5.70" height="5.70" viewBox="0 0 10 10" preserveAspectRatio="none"><circle cx="5" cy="5" r="5" fill="#ff0000"/></svg>
<span class="t" style="left:451.20px;top:161.29px;font-size:8.6px;line-height:12.0px;color:#555;letter-spacing:-0.188px;">Inditex Москва и С...</span>
<svg class="b" style="left:532.25px;top:163.39px;" width="8.40" height="7.00" viewBox="0 0.3 17 13.7" preserveAspectRatio="none"><path d="M13 8.500V11.500A1.800 1.800 0 0 1 11.200 13.300H2.500A1.800 1.800 0 0 1 .7 11.500V4.300A1.800 1.800 0 0 1 2.500 2.500H9" fill="none" stroke="#a9a9a9" stroke-width="1.350" stroke-linecap="round"/><path d="M6.500 8 14 .5 16.800 3.300 9.300 10.800 6 11.300z" fill="#a9a9a9"/></svg>
<div class="b" style="left:555.50px;top:159.79px;width:62.00px;height:13.80px;background:rgba(255,255,255,.3);border:1px solid #d0dae6;box-sizing:border-box"></div>
<div class="b" style="left:555.60px;top:159.99px;width:55.62px;height:13.40px;background:#4aa934"></div>
<span class="t" style="left:578.30px;top:161.69px;font-size:8.4px;line-height:11.8px;color:#1f3a18;letter-spacing:-0.255px;">90%</span>
<svg class="b" style="left:637.30px;top:163.49px;" width="5.60" height="7.20" viewBox="0.15 0.15 11.7 15.7" preserveAspectRatio="none"><rect x="1" y="1" width="10" height="14" rx="1.800" fill="none" stroke="#3c3c3c" stroke-width="1.700"/><rect x="1" y="11.300" width="10" height="3.700" fill="#3c3c3c"/></svg>
<span class="t" style="left:645.80px;top:161.29px;font-size:8.6px;line-height:12.0px;color:#444;letter-spacing:-0.021px;">Мобильный контакт</span>
<div class="b" style="left:738.50px;top:161.09px;width:48.70px;height:12.00px;background:#58b55a"></div>
<span class="t" style="left:745.20px;top:162.74px;font-size:7.5px;line-height:10.5px;color:#fff;letter-spacing:-0.310px;">Решена</span>
<svg class="b" style="left:773.90px;top:164.19px;" width="7.30" height="5.90" viewBox="0 0.3 17 13.7" preserveAspectRatio="none"><path d="M13 8.500V11.500A1.800 1.800 0 0 1 11.200 13.300H2.500A1.800 1.800 0 0 1 .7 11.500V4.300A1.800 1.800 0 0 1 2.500 2.500H9" fill="none" stroke="#fff" stroke-width="1.350" stroke-linecap="round"/><path d="M6.500 8 14 .5 16.800 3.300 9.300 10.800 6 11.300z" fill="#fff"/></svg>
<svg class="b" style="left:824.80px;top:163.29px;" width="7.40" height="7.60" viewBox="0 0 15 15" preserveAspectRatio="none"><path d="M4.300 6.800 9.900 12.400a2.100 2.100 0 0 0 3-3L6.300 2.800a3.050 3.050 0 0 0-4.300 4.300l6.700 6.700" fill="none" stroke="#7f94b3" stroke-width="1.650" stroke-linecap="round"/></svg>
<svg class="b" style="left:839.80px;top:163.49px;" width="8.20" height="7.90" viewBox="0.4 0.4 15.9 15.9" preserveAspectRatio="none"><circle cx="6.800" cy="6.800" r="5.600" fill="none" stroke="#7b99be" stroke-width="1.600"/><path d="M11.200 11.200 15 15" stroke="#7b99be" stroke-width="2.600" stroke-linecap="round"/><path d="M4 6.800H9.600M6.800 4V9.600" stroke="#7b99be" stroke-width="1.500"/></svg>
<div class="b" style="left:68.00px;top:179.12px;width:4.00px;height:23.83px;background:#55b458"></div>
<div class="b" style="left:92.30px;top:187.32px;width:1.80px;height:4.40px;background:linear-gradient(#f23a2e,#f6602a);border-radius:.3px"></div>
<div class="b" style="left:92.30px;top:192.62px;width:1.80px;height:1.60px;background:#fa7a2c"></div>
<svg class="b" style="left:79.90px;top:188.52px;" width="7.30" height="5.60" viewBox="0.5 2.5 13 8.6" preserveAspectRatio="none"><path d="M1.500 3.500 7 9 12.500 3.500" fill="none" stroke="#111" stroke-width="2.800"/></svg>
<span class="t" style="left:96.60px;top:185.12px;font-size:8.6px;line-height:12.0px;color:#8c9eb7;letter-spacing:-0.280px;transform:scaleX(0.9812);">000261</span>
<span class="t" style="left:158.30px;top:185.12px;font-size:8.6px;line-height:12.0px;color:#555;letter-spacing:-0.185px;">Не включается</span>
<span class="t" style="left:304.00px;top:185.12px;font-size:8.6px;line-height:12.0px;color:#555;letter-spacing:-0.112px;">Первая линия поддержки \...</span>
<svg class="b" style="left:419.40px;top:187.22px;" width="8.40" height="7.00" viewBox="0 0.3 17 13.7" preserveAspectRatio="none"><path d="M13 8.500V11.500A1.800 1.800 0 0 1 11.200 13.300H2.500A1.800 1.800 0 0 1 .7 11.500V4.300A1.800 1.800 0 0 1 2.500 2.500H9" fill="none" stroke="#a9a9a9" stroke-width="1.350" stroke-linecap="round"/><path d="M6.500 8 14 .5 16.800 3.300 9.300 10.800 6 11.300z" fill="#a9a9a9"/></svg>
<svg class="b" style="left:442.30px;top:188.07px;" width="5.70" height="5.70" viewBox="0 0 10 10" preserveAspectRatio="none"><circle cx="5" cy="5" r="5" fill="#00ee00"/></svg>
<span class="t" style="left:451.20px;top:185.12px;font-size:8.6px;line-height:12.0px;color:#555;letter-spacing:-0.106px;">Inditex Поволжье</span>
<svg class="b" style="left:521.00px;top:187.22px;" width="8.40" height="7.00" viewBox="0 0.3 17 13.7" preserveAspectRatio="none"><path d="M13 8.500V11.500A1.800 1.800 0 0 1 11.200 13.300H2.500A1.800 1.800 0 0 1 .7 11.500V4.300A1.800 1.800 0 0 1 2.500 2.500H9" fill="none" stroke="#a9a9a9" stroke-width="1.350" stroke-linecap="round"/><path d="M6.500 8 14 .5 16.800 3.300 9.300 10.800 6 11.300z" fill="#a9a9a9"/></svg>
<svg class="b" style="left:637.40px;top:187.52px;" width="6.60" height="6.40" viewBox="1 1 14 14" preserveAspectRatio="none"><path d="M3.200 1.200 5.600 1 7 4.400 5.400 5.800C6.300 7.800 8.200 9.700 10.200 10.600L11.600 9 15 10.400 14.800 12.800C14.600 14.200 13.400 15 12 14.800 6.200 14 2 9.800 1.200 4 1 2.600 1.800 1.400 3.200 1.200z" fill="#111"/></svg>
<span class="t" style="left:647.40px;top:185.12px;font-size:8.6px;line-height:12.0px;color:#444;letter-spacing:-0.127px;">Диспетчер</span>
<div class="b" style="left:738.50px;top:184.92px;width:72.20px;height:12.00px;background:#3cc3ec"></div>
<span class="t" style="left:745.20px;top:186.57px;font-size:7.5px;line-height:10.5px;color:#fff;letter-spacing:-0.312px;">Передано в о...</span>
<svg class="b" style="left:796.90px;top:188.02px;" width="7.30" height="5.90" viewBox="0 0.3 17 13.7" preserveAspectRatio="none"><path d="M13 8.500V11.500A1.800 1.800 0 0 1 11.200 13.300H2.500A1.800 1.800 0 0 1 .7 11.500V4.300A1.800 1.800 0 0 1 2.500 2.500H9" fill="none" stroke="#fff" stroke-width="1.350" stroke-linecap="round"/><path d="M6.500 8 14 .5 16.800 3.300 9.300 10.800 6 11.300z" fill="#fff"/></svg>
<svg class="b" style="left:839.80px;top:187.32px;" width="8.20" height="7.90" viewBox="0.4 0.4 15.9 15.9" preserveAspectRatio="none"><circle cx="6.800" cy="6.800" r="5.600" fill="none" stroke="#7b99be" stroke-width="1.600"/><path d="M11.200 11.200 15 15" stroke="#7b99be" stroke-width="2.600" stroke-linecap="round"/><path d="M4 6.800H9.600M6.800 4V9.600" stroke="#7b99be" stroke-width="1.500"/></svg>
<div class="b" style="left:72.00px;top:202.95px;width:782.00px;height:23.83px;background:#ffe9e9"></div>
<div class="b" style="left:68.00px;top:202.95px;width:4.00px;height:23.83px;background:#8b9db5"></div>
<span class="t" style="left:103.75px;top:208.95px;font-size:8.6px;line-height:12.0px;color:#8c9eb7;letter-spacing:-0.280px;transform:scaleX(0.9812);">000262</span>
<span class="t" style="left:158.30px;top:208.95px;font-size:8.6px;line-height:12.0px;color:#222;font-weight:bold;letter-spacing:-0.189px;">Ещё один портал сломался н...</span>
<span class="t" style="left:304.00px;top:208.95px;font-size:8.6px;line-height:12.0px;color:#555;letter-spacing:-0.180px;">Разработчик системы ав...</span>
<svg class="b" style="left:408.70px;top:209.95px;" width="8.10" height="9.20" viewBox="0.2 0.2 14.6 16.7" preserveAspectRatio="none"><path d="M4.500 10V3.500a1.200 1.200 0 0 1 2.400 0V2a1.200 1.200 0 0 1 2.400 0v.8a1.200 1.200 0 0 1 2.400 0V4.800a1.200 1.200 0 0 1 2.400 0V11c0 3.300-2 5.200-5 5.200-2.500 0-3.700-1-4.800-3L1 10.200c-.6-1.200.9-2.200 1.800-1z" fill="none" stroke="#a9a9a9" stroke-width="1.250" stroke-linejoin="round"/></svg>
<svg class="b" style="left:419.50px;top:211.05px;" width="8.40" height="7.00" viewBox="0 0.3 17 13.7" preserveAspectRatio="none"><path d="M13 8.500V11.500A1.800 1.800 0 0 1 11.200 13.300H2.500A1.800 1.800 0 0 1 .7 11.500V4.300A1.800 1.800 0 0 1 2.500 2.500H9" fill="none" stroke="#a9a9a9" stroke-width="1.350" stroke-linecap="round"/><path d="M6.500 8 14 .5 16.800 3.300 9.300 10.800 6 11.300z" fill="#a9a9a9"/></svg>
<svg class="b" style="left:442.30px;top:211.90px;" width="5.70" height="5.70" viewBox="0 0 10 10" preserveAspectRatio="none"><circle cx="5" cy="5" r="5" fill="#ff0000"/></svg>
<span class="t" style="left:451.20px;top:208.95px;font-size:8.6px;line-height:12.0px;color:#555;letter-spacing:-0.188px;">Inditex Москва и С...</span>
<svg class="b" style="left:532.25px;top:211.05px;" width="8.40" height="7.00" viewBox="0 0.3 17 13.7" preserveAspectRatio="none"><path d="M13 8.500V11.500A1.800 1.800 0 0 1 11.200 13.300H2.500A1.800 1.800 0 0 1 .7 11.500V4.300A1.800 1.800 0 0 1 2.500 2.500H9" fill="none" stroke="#a9a9a9" stroke-width="1.350" stroke-linecap="round"/><path d="M6.500 8 14 .5 16.800 3.300 9.300 10.800 6 11.300z" fill="#a9a9a9"/></svg>
<div class="b" style="left:555.50px;top:207.45px;width:62.00px;height:13.80px;background:rgba(255,255,255,.3);border:1px solid #d0dae6;box-sizing:border-box"></div>
<div class="b" style="left:555.60px;top:207.65px;width:55.62px;height:13.40px;background:#4aa934"></div>
<span class="t" style="left:578.30px;top:209.35px;font-size:8.4px;line-height:11.8px;color:#1f3a18;letter-spacing:-0.255px;">90%</span>
<svg class="b" style="left:637.30px;top:211.15px;" width="5.60" height="7.20" viewBox="0.15 0.15 11.7 15.7" preserveAspectRatio="none"><rect x="1" y="1" width="10" height="14" rx="1.800" fill="none" stroke="#3c3c3c" stroke-width="1.700"/><rect x="1" y="11.300" width="10" height="3.700" fill="#3c3c3c"/></svg>
<span class="t" style="left:645.80px;top:208.95px;font-size:8.6px;line-height:12.0px;color:#444;letter-spacing:-0.021px;">Мобильный контакт</span>
<div class="b" style="left:738.50px;top:208.75px;width:72.95px;height:12.00px;background:#a535d2"></div>
<span class="t" style="left:745.20px;top:210.40px;font-size:7.5px;line-height:10.5px;color:#fff;letter-spacing:-0.185px;">Контроль кач...</span>
<svg class="b" style="left:797.90px;top:211.85px;" width="7.30" height="5.90" viewBox="0 0.3 17 13.7" preserveAspectRatio="none"><path d="M13 8.500V11.500A1.800 1.800 0 0 1 11.200 13.300H2.500A1.800 1.800 0 0 1 .7 11.500V4.300A1.800 1.800 0 0 1 2.500 2.500H9" fill="none" stroke="#fff" stroke-width="1.350" stroke-linecap="round"/><path d="M6.500 8 14 .5 16.800 3.300 9.300 10.800 6 11.300z" fill="#fff"/></svg>
<svg class="b" style="left:824.80px;top:210.95px;" width="7.40" height="7.60" viewBox="0 0 15 15" preserveAspectRatio="none"><path d="M4.300 6.800 9.900 12.400a2.100 2.100 0 0 0 3-3L6.300 2.800a3.050 3.050 0 0 0-4.300 4.300l6.700 6.700" fill="none" stroke="#7f94b3" stroke-width="1.650" stroke-linecap="round"/></svg>
<svg class="b" style="left:839.80px;top:211.15px;" width="8.20" height="7.90" viewBox="0.4 0.4 15.9 15.9" preserveAspectRatio="none"><circle cx="6.800" cy="6.800" r="5.600" fill="none" stroke="#7b99be" stroke-width="1.600"/><path d="M11.200 11.200 15 15" stroke="#7b99be" stroke-width="2.600" stroke-linecap="round"/><path d="M4 6.800H9.600M6.800 4V9.600" stroke="#7b99be" stroke-width="1.500"/></svg>
<div class="b" style="left:72.00px;top:226.78px;width:782.00px;height:23.83px;background:#ffe9e9"></div>
<div class="b" style="left:68.00px;top:226.78px;width:4.00px;height:23.83px;background:#e82944"></div>
<div class="b" style="left:104.10px;top:234.98px;width:1.80px;height:4.40px;background:linear-gradient(#f23a2e,#f6602a);border-radius:.3px"></div>
<div class="b" style="left:104.10px;top:240.28px;width:1.80px;height:1.60px;background:#fa7a2c"></div>
<svg class="b" style="left:91.90px;top:236.18px;" width="7.50" height="5.60" viewBox="0.5 2.5 13 8.6" preserveAspectRatio="none"><path d="M1.500 3.500 7 9 12.500 3.500" fill="none" stroke="#111" stroke-width="2.800"/></svg>
<span class="t" style="left:108.75px;top:232.78px;font-size:8.6px;line-height:12.0px;color:#8c9eb7;letter-spacing:-0.280px;transform:scaleX(0.9812);">000237</span>
<span class="t" style="left:158.30px;top:232.78px;font-size:8.6px;line-height:12.0px;color:#555;letter-spacing:-0.128px;">Клиент просит помощи 003074...</span>
<span class="t" style="left:304.00px;top:232.78px;font-size:8.6px;line-height:12.0px;color:#555;letter-spacing:-0.164px;">Группа Москва \ Агаев В.</span>
<svg class="b" style="left:403.20px;top:233.78px;" width="8.10" height="9.20" viewBox="0.2 0.2 14.6 16.7" preserveAspectRatio="none"><path d="M4.500 10V3.500a1.200 1.200 0 0 1 2.400 0V2a1.200 1.200 0 0 1 2.400 0v.8a1.200 1.200 0 0 1 2.400 0V4.800a1.200 1.200 0 0 1 2.400 0V11c0 3.300-2 5.200-5 5.200-2.500 0-3.700-1-4.800-3L1 10.200c-.6-1.200.9-2.200 1.800-1z" fill="none" stroke="#a9a9a9" stroke-width="1.250" stroke-linejoin="round"/></svg>
<svg class="b" style="left:414.00px;top:234.88px;" width="8.40" height="7.00" viewBox="0 0.3 17 13.7" preserveAspectRatio="none"><path d="M13 8.500V11.500A1.800 1.800 0 0 1 11.200 13.300H2.500A1.800 1.800 0 0 1 .7 11.500V4.300A1.800 1.800 0 0 1 2.500 2.500H9" fill="none" stroke="#a9a9a9" stroke-width="1.350" stroke-linecap="round"/><path d="M6.500 8 14 .5 16.800 3.300 9.300 10.800 6 11.300z" fill="#a9a9a9"/></svg>
<svg class="b" style="left:442.30px;top:235.73px;" width="5.70" height="5.70" viewBox="0 0 10 10" preserveAspectRatio="none"><circle cx="5" cy="5" r="5" fill="#ff0000"/></svg>
<span class="t" style="left:451.20px;top:232.78px;font-size:8.6px;line-height:12.0px;color:#555;letter-spacing:-0.275px;">Риксос Красная П...</span>
<svg class="b" style="left:532.00px;top:234.88px;" width="8.40" height="7.00" viewBox="0 0.3 17 13.7" preserveAspectRatio="none"><path d="M13 8.500V11.500A1.800 1.800 0 0 1 11.200 13.300H2.500A1.800 1.800 0 0 1 .7 11.500V4.300A1.800 1.800 0 0 1 2.500 2.500H9" fill="none" stroke="#a9a9a9" stroke-width="1.350" stroke-linecap="round"/><path d="M6.500 8 14 .5 16.800 3.300 9.300 10.800 6 11.300z" fill="#a9a9a9"/></svg>
<svg class="b" style="left:637.30px;top:235.28px;" width="8.50" height="6.60" viewBox="0 0 18 13" preserveAspectRatio="none"><rect x=".8" y=".8" width="16.400" height="11.400" rx="1.200" fill="none" stroke="#444" stroke-width="1.600"/><path d="M1.200 2.200 9 8 16.800 2.200" fill="none" stroke="#444" stroke-width="1.600"/></svg>
<span class="t" style="left:648.70px;top:232.78px;font-size:8.6px;line-height:12.0px;color:#444;letter-spacing:-0.135px;">Электронная почта</span>
<div class="b" style="left:738.50px;top:232.58px;width:50.20px;height:12.00px;background:#8b9db5"></div>
<span class="t" style="left:745.20px;top:234.23px;font-size:7.5px;line-height:10.5px;color:#fff;letter-spacing:-0.297px;">Закрыта</span>
<svg class="b" style="left:775.40px;top:235.68px;" width="7.30" height="5.90" viewBox="0 0.3 17 13.7" preserveAspectRatio="none"><path d="M13 8.500V11.500A1.800 1.800 0 0 1 11.200 13.300H2.500A1.800 1.800 0 0 1 .7 11.500V4.300A1.800 1.800 0 0 1 2.500 2.500H9" fill="none" stroke="#fff" stroke-width="1.350" stroke-linecap="round"/><path d="M6.500 8 14 .5 16.800 3.300 9.300 10.800 6 11.300z" fill="#fff"/></svg>
<svg class="b" style="left:839.80px;top:234.98px;" width="8.20" height="7.90" viewBox="0.4 0.4 15.9 15.9" preserveAspectRatio="none"><circle cx="6.800" cy="6.800" r="5.600" fill="none" stroke="#7b99be" stroke-width="1.600"/><path d="M11.200 11.200 15 15" stroke="#7b99be" stroke-width="2.600" stroke-linecap="round"/><path d="M4 6.800H9.600M6.800 4V9.600" stroke="#7b99be" stroke-width="1.500"/></svg>
<div class="b" style="left:72.00px;top:250.61px;width:782.00px;height:23.83px;background:#ffe9e9"></div>
<div class="b" style="left:68.00px;top:250.61px;width:4.00px;height:23.83px;background:#55b458"></div>
<span class="t" style="left:116.00px;top:256.61px;font-size:8.6px;line-height:12.0px;color:#8c9eb7;letter-spacing:-0.280px;transform:scaleX(0.9812);">000240</span>
<span class="t" style="left:158.30px;top:256.61px;font-size:8.6px;line-height:12.0px;color:#222;font-weight:bold;letter-spacing:-0.076px;">Дублирование позиций в пр...</span>
<span class="t" style="left:304.00px;top:256.61px;font-size:8.6px;line-height:12.0px;color:#555;letter-spacing:-0.126px;">Трей-сервис \ Конюшин ...</span>
<svg class="b" style="left:408.20px;top:257.61px;" width="8.10" height="9.20" viewBox="0.2 0.2 14.6 16.7" preserveAspectRatio="none"><path d="M4.500 10V3.500a1.200 1.200 0 0 1 2.400 0V2a1.200 1.200 0 0 1 2.400 0v.8a1.200 1.200 0 0 1 2.400 0V4.800a1.200 1.200 0 0 1 2.400 0V11c0 3.300-2 5.200-5 5.200-2.500 0-3.700-1-4.800-3L1 10.200c-.6-1.200.9-2.200 1.800-1z" fill="none" stroke="#a9a9a9" stroke-width="1.250" stroke-linejoin="round"/></svg>
<svg class="b" style="left:419.00px;top:258.71px;" width="8.40" height="7.00" viewBox="0 0.3 17 13.7" preserveAspectRatio="none"><path d="M13 8.500V11.500A1.800 1.800 0 0 1 11.200 13.300H2.500A1.800 1.800 0 0 1 .7 11.500V4.300A1.800 1.800 0 0 1 2.500 2.500H9" fill="none" stroke="#a9a9a9" stroke-width="1.350" stroke-linecap="round"/><path d="M6.500 8 14 .5 16.800 3.300 9.300 10.800 6 11.300z" fill="#a9a9a9"/></svg>
<svg class="b" style="left:442.30px;top:259.56px;" width="5.70" height="5.70" viewBox="0 0 10 10" preserveAspectRatio="none"><circle cx="5" cy="5" r="5" fill="#ff0000"/></svg>
<span class="t" style="left:451.20px;top:256.61px;font-size:8.6px;line-height:12.0px;color:#555;letter-spacing:-0.275px;">Риксос Красная П...</span>
<svg class="b" style="left:532.00px;top:258.71px;" width="8.40" height="7.00" viewBox="0 0.3 17 13.7" preserveAspectRatio="none"><path d="M13 8.500V11.500A1.800 1.800 0 0 1 11.200 13.300H2.500A1.800 1.800 0 0 1 .7 11.500V4.300A1.800 1.800 0 0 1 2.500 2.500H9" fill="none" stroke="#a9a9a9" stroke-width="1.350" stroke-linecap="round"/><path d="M6.500 8 14 .5 16.800 3.300 9.300 10.800 6 11.300z" fill="#a9a9a9"/></svg>
<svg class="b" style="left:637.30px;top:258.81px;" width="5.60" height="7.20" viewBox="0.15 0.15 11.7 15.7" preserveAspectRatio="none"><rect x="1" y="1" width="10" height="14" rx="1.800" fill="none" stroke="#3c3c3c" stroke-width="1.700"/><rect x="1" y="11.300" width="10" height="3.700" fill="#3c3c3c"/></svg>
<span class="t" style="left:645.80px;top:256.61px;font-size:8.6px;line-height:12.0px;color:#444;letter-spacing:-0.021px;">Мобильный контакт</span>
<div class="b" style="left:738.50px;top:256.41px;width:48.70px;height:12.00px;background:#58b55a"></div>
<span class="t" style="left:745.20px;top:258.06px;font-size:7.5px;line-height:10.5px;color:#fff;letter-spacing:-0.310px;">Решена</span>
<svg class="b" style="left:773.90px;top:259.51px;" width="7.30" height="5.90" viewBox="0 0.3 17 13.7" preserveAspectRatio="none"><path d="M13 8.500V11.500A1.800 1.800 0 0 1 11.200 13.300H2.500A1.800 1.800 0 0 1 .7 11.500V4.300A1.800 1.800 0 0 1 2.500 2.500H9" fill="none" stroke="#fff" stroke-width="1.350" stroke-linecap="round"/><path d="M6.500 8 14 .5 16.800 3.300 9.300 10.800 6 11.300z" fill="#fff"/></svg>
<svg class="b" style="left:824.80px;top:258.61px;" width="7.40" height="7.60" viewBox="0 0 15 15" preserveAspectRatio="none"><path d="M4.300 6.800 9.900 12.400a2.100 2.100 0 0 0 3-3L6.300 2.800a3.050 3.050 0 0 0-4.300 4.300l6.700 6.700" fill="none" stroke="#7f94b3" stroke-width="1.650" stroke-linecap="round"/></svg>
<svg class="b" style="left:839.80px;top:258.81px;" width="8.20" height="7.90" viewBox="0.4 0.4 15.9 15.9" preserveAspectRatio="none"><circle cx="6.800" cy="6.800" r="5.600" fill="none" stroke="#7b99be" stroke-width="1.600"/><path d="M11.200 11.200 15 15" stroke="#7b99be" stroke-width="2.600" stroke-linecap="round"/><path d="M4 6.800H9.600M6.800 4V9.600" stroke="#7b99be" stroke-width="1.500"/></svg>
<div class="b" style="left:68.00px;top:274.44px;width:4.00px;height:23.83px;background:#55b458"></div>
<div class="b" style="left:92.30px;top:282.64px;width:1.80px;height:4.40px;background:linear-gradient(#f23a2e,#f6602a);border-radius:.3px"></div>
<div class="b" style="left:92.30px;top:287.94px;width:1.80px;height:1.60px;background:#fa7a2c"></div>
<span class="t" style="left:96.60px;top:280.44px;font-size:8.6px;line-height:12.0px;color:#8c9eb7;letter-spacing:-0.280px;transform:scaleX(0.9812);">000260</span>
<span class="t" style="left:158.30px;top:280.44px;font-size:8.6px;line-height:12.0px;color:#222;font-weight:bold;letter-spacing:-0.047px;">Обновить датчик</span>
<span class="t" style="left:304.00px;top:280.44px;font-size:8.6px;line-height:12.0px;color:#555;letter-spacing:-0.133px;">Вектор+ (подрядчик / па...</span>
<svg class="b" style="left:407.70px;top:281.44px;" width="8.10" height="9.20" viewBox="0.2 0.2 14.6 16.7" preserveAspectRatio="none"><path d="M4.500 10V3.500a1.200 1.200 0 0 1 2.400 0V2a1.200 1.200 0 0 1 2.400 0v.8a1.200 1.200 0 0 1 2.400 0V4.800a1.200 1.200 0 0 1 2.400 0V11c0 3.300-2 5.200-5 5.200-2.500 0-3.700-1-4.800-3L1 10.200c-.6-1.200.9-2.200 1.800-1z" fill="none" stroke="#a9a9a9" stroke-width="1.250" stroke-linejoin="round"/></svg>
<svg class="b" style="left:418.50px;top:282.54px;" width="8.40" height="7.00" viewBox="0 0.3 17 13.7" preserveAspectRatio="none"><path d="M13 8.500V11.500A1.800 1.800 0 0 1 11.200 13.300H2.500A1.800 1.800 0 0 1 .7 11.500V4.300A1.800 1.800 0 0 1 2.500 2.500H9" fill="none" stroke="#a9a9a9" stroke-width="1.350" stroke-linecap="round"/><path d="M6.500 8 14 .5 16.800 3.300 9.300 10.800 6 11.300z" fill="#a9a9a9"/></svg>
<svg class="b" style="left:442.30px;top:283.39px;" width="5.70" height="5.70" viewBox="0 0 10 10" preserveAspectRatio="none"><circle cx="5" cy="5" r="5" fill="#ff0000"/></svg>
<span class="t" style="left:451.20px;top:280.44px;font-size:8.6px;line-height:12.0px;color:#555;letter-spacing:-0.280px;transform:scaleX(0.9395);">Zara</span>
<svg class="b" style="left:470.50px;top:282.54px;" width="8.40" height="7.00" viewBox="0 0.3 17 13.7" preserveAspectRatio="none"><path d="M13 8.500V11.500A1.800 1.800 0 0 1 11.200 13.300H2.500A1.800 1.800 0 0 1 .7 11.500V4.300A1.800 1.800 0 0 1 2.500 2.500H9" fill="none" stroke="#a9a9a9" stroke-width="1.350" stroke-linecap="round"/><path d="M6.500 8 14 .5 16.800 3.300 9.300 10.800 6 11.300z" fill="#a9a9a9"/></svg>
<svg class="b" style="left:637.60px;top:282.44px;" width="7.50" height="7.20" viewBox="0 0.8 16 14.4" preserveAspectRatio="none"><path d="M2.420 7.510A5.600 5.600 0 0 1 12.850 5.200" fill="none" stroke="#111" stroke-width="2.500"/><path d="M13.580 8.490A5.600 5.600 0 0 1 3.150 10.800" fill="none" stroke="#111" stroke-width="2.500"/><path d="M16 1V7.400H9.600z" fill="#111"/><path d="M0 15V8.600H6.400z" fill="#111"/></svg>
<span class="t" style="left:647.70px;top:280.44px;font-size:8.6px;line-height:12.0px;color:#444;letter-spacing:-0.209px;">Повторяющаяся за...</span>
<div class="b" style="left:738.50px;top:280.24px;width:51.50px;height:12.00px;background:#ff8a1f"></div>
<span class="t" style="left:745.20px;top:281.89px;font-size:7.5px;line-height:10.5px;color:#fff;letter-spacing:-0.270px;">Открыта</span>
<svg class="b" style="left:776.15px;top:283.34px;" width="7.30" height="5.90" viewBox="0 0.3 17 13.7" preserveAspectRatio="none"><path d="M13 8.500V11.500A1.800 1.800 0 0 1 11.200 13.300H2.500A1.800 1.800 0 0 1 .7 11.500V4.300A1.800 1.800 0 0 1 2.500 2.500H9" fill="none" stroke="#fff" stroke-width="1.350" stroke-linecap="round"/><path d="M6.500 8 14 .5 16.800 3.300 9.300 10.800 6 11.300z" fill="#fff"/></svg>
<svg class="b" style="left:839.80px;top:282.64px;" width="8.20" height="7.90" viewBox="0.4 0.4 15.9 15.9" preserveAspectRatio="none"><circle cx="6.800" cy="6.800" r="5.600" fill="none" stroke="#7b99be" stroke-width="1.600"/><path d="M11.200 11.200 15 15" stroke="#7b99be" stroke-width="2.600" stroke-linecap="round"/><path d="M4 6.800H9.600M6.800 4V9.600" stroke="#7b99be" stroke-width="1.500"/></svg>
<div class="b" style="left:72.00px;top:298.27px;width:782.00px;height:23.83px;background:#ffe9e9"></div>
<div class="b" style="left:68.00px;top:298.27px;width:4.00px;height:23.83px;background:#e82944"></div>
<span class="t" style="left:91.75px;top:304.27px;font-size:8.6px;line-height:12.0px;color:#8c9eb7;letter-spacing:-0.280px;transform:scaleX(0.9812);">000259</span>
<span class="t" style="left:158.30px;top:304.27px;font-size:8.6px;line-height:12.0px;color:#222;font-weight:bold;letter-spacing:-0.185px;">Сломался Контейнер-сборни...</span>
<span class="t" style="left:304.00px;top:304.27px;font-size:8.6px;line-height:12.0px;color:#555;letter-spacing:-0.049px;">Группа Москва \ Игорь Р.</span>
<svg class="b" style="left:404.70px;top:306.37px;" width="8.40" height="7.00" viewBox="0 0.3 17 13.7" preserveAspectRatio="none"><path d="M13 8.500V11.500A1.800 1.800 0 0 1 11.200 13.300H2.500A1.800 1.800 0 0 1 .7 11.500V4.300A1.800 1.800 0 0 1 2.500 2.500H9" fill="none" stroke="#a9a9a9" stroke-width="1.350" stroke-linecap="round"/><path d="M6.500 8 14 .5 16.800 3.300 9.300 10.800 6 11.300z" fill="#a9a9a9"/></svg>
<svg class="b" style="left:442.30px;top:307.22px;" width="5.70" height="5.70" viewBox="0 0 10 10" preserveAspectRatio="none"><circle cx="5" cy="5" r="5" fill="#ff0000"/></svg>
<span class="t" style="left:451.20px;top:304.27px;font-size:8.6px;line-height:12.0px;color:#555;letter-spacing:-0.188px;">Inditex Москва и С...</span>
<svg class="b" style="left:532.25px;top:306.37px;" width="8.40" height="7.00" viewBox="0 0.3 17 13.7" preserveAspectRatio="none"><path d="M13 8.500V11.500A1.800 1.800 0 0 1 11.200 13.300H2.500A1.800 1.800 0 0 1 .7 11.500V4.300A1.800 1.800 0 0 1 2.500 2.500H9" fill="none" stroke="#a9a9a9" stroke-width="1.350" stroke-linecap="round"/><path d="M6.500 8 14 .5 16.800 3.300 9.300 10.800 6 11.300z" fill="#a9a9a9"/></svg>
<div class="b" style="left:555.50px;top:302.77px;width:62.00px;height:13.80px;background:rgba(255,255,255,.3);border:1px solid #d0dae6;box-sizing:border-box"></div>
<div class="b" style="left:555.60px;top:302.97px;width:46.35px;height:13.40px;background:#4aa934"></div>
<span class="t" style="left:578.45px;top:304.67px;font-size:8.4px;line-height:11.8px;color:#1f3a18;letter-spacing:-0.280px;transform:scaleX(0.9858);">75%</span>
<svg class="b" style="left:637.30px;top:306.47px;" width="5.60" height="7.20" viewBox="0.15 0.15 11.7 15.7" preserveAspectRatio="none"><rect x="1" y="1" width="10" height="14" rx="1.800" fill="none" stroke="#3c3c3c" stroke-width="1.700"/><rect x="1" y="11.300" width="10" height="3.700" fill="#3c3c3c"/></svg>
<span class="t" style="left:645.80px;top:304.27px;font-size:8.6px;line-height:12.0px;color:#444;letter-spacing:-0.021px;">Мобильный контакт</span>
<div class="b" style="left:738.50px;top:304.07px;width:72.95px;height:12.00px;background:#a535d2"></div>
<span class="t" style="left:745.20px;top:305.72px;font-size:7.5px;line-height:10.5px;color:#fff;letter-spacing:-0.185px;">Контроль кач...</span>
<svg class="b" style="left:797.90px;top:307.17px;" width="7.30" height="5.90" viewBox="0 0.3 17 13.7" preserveAspectRatio="none"><path d="M13 8.500V11.500A1.800 1.800 0 0 1 11.200 13.300H2.500A1.800 1.800 0 0 1 .7 11.500V4.300A1.800 1.800 0 0 1 2.500 2.500H9" fill="none" stroke="#fff" stroke-width="1.350" stroke-linecap="round"/><path d="M6.500 8 14 .5 16.800 3.300 9.300 10.800 6 11.300z" fill="#fff"/></svg>
<svg class="b" style="left:824.80px;top:306.27px;" width="7.40" height="7.60" viewBox="0 0 15 15" preserveAspectRatio="none"><path d="M4.300 6.800 9.900 12.400a2.100 2.100 0 0 0 3-3L6.300 2.800a3.050 3.050 0 0 0-4.300 4.300l6.700 6.700" fill="none" stroke="#7f94b3" stroke-width="1.650" stroke-linecap="round"/></svg>
<svg class="b" style="left:839.80px;top:306.47px;" width="8.20" height="7.90" viewBox="0.4 0.4 15.9 15.9" preserveAspectRatio="none"><circle cx="6.800" cy="6.800" r="5.600" fill="none" stroke="#7b99be" stroke-width="1.600"/><path d="M11.200 11.200 15 15" stroke="#7b99be" stroke-width="2.600" stroke-linecap="round"/><path d="M4 6.800H9.600M6.800 4V9.600" stroke="#7b99be" stroke-width="1.500"/></svg>
<div class="b" style="left:68.00px;top:322.10px;width:4.00px;height:23.83px;background:#7a52d6"></div>
<div class="b" style="left:92.30px;top:330.30px;width:1.80px;height:4.40px;background:linear-gradient(#f23a2e,#f6602a);border-radius:.3px"></div>
<div class="b" style="left:92.30px;top:335.60px;width:1.80px;height:1.60px;background:#fa7a2c"></div>
<span class="t" style="left:96.60px;top:328.10px;font-size:8.6px;line-height:12.0px;color:#8c9eb7;letter-spacing:-0.280px;transform:scaleX(0.9812);">000258</span>
<span class="t" style="left:158.30px;top:328.10px;font-size:8.6px;line-height:12.0px;color:#222;font-weight:bold;letter-spacing:-0.060px;">Течет кран в туалете</span>
<span class="t" style="left:304.00px;top:328.10px;font-size:8.6px;line-height:12.0px;color:#555;letter-spacing:-0.240px;">Бухгалтерия</span>
<svg class="b" style="left:354.70px;top:329.10px;" width="8.10" height="9.20" viewBox="0.2 0.2 14.6 16.7" preserveAspectRatio="none"><path d="M4.500 10V3.500a1.200 1.200 0 0 1 2.400 0V2a1.200 1.200 0 0 1 2.400 0v.8a1.200 1.200 0 0 1 2.400 0V4.800a1.200 1.200 0 0 1 2.400 0V11c0 3.300-2 5.200-5 5.200-2.500 0-3.700-1-4.800-3L1 10.200c-.6-1.200.9-2.200 1.800-1z" fill="none" stroke="#a9a9a9" stroke-width="1.250" stroke-linejoin="round"/></svg>
<svg class="b" style="left:365.50px;top:330.20px;" width="8.40" height="7.00" viewBox="0 0.3 17 13.7" preserveAspectRatio="none"><path d="M13 8.500V11.500A1.800 1.800 0 0 1 11.200 13.300H2.500A1.800 1.800 0 0 1 .7 11.500V4.300A1.800 1.800 0 0 1 2.500 2.500H9" fill="none" stroke="#a9a9a9" stroke-width="1.350" stroke-linecap="round"/><path d="M6.500 8 14 .5 16.800 3.300 9.300 10.800 6 11.300z" fill="#a9a9a9"/></svg>
<svg class="b" style="left:442.30px;top:331.05px;" width="5.70" height="5.70" viewBox="0 0 10 10" preserveAspectRatio="none"><circle cx="5" cy="5" r="5" fill="#ff0000"/></svg>
<span class="t" style="left:451.20px;top:328.10px;font-size:8.6px;line-height:12.0px;color:#555;letter-spacing:-0.280px;transform:scaleX(0.9395);">Zara</span>
<svg class="b" style="left:470.50px;top:330.20px;" width="8.40" height="7.00" viewBox="0 0.3 17 13.7" preserveAspectRatio="none"><path d="M13 8.500V11.500A1.800 1.800 0 0 1 11.200 13.300H2.500A1.800 1.800 0 0 1 .7 11.500V4.300A1.800 1.800 0 0 1 2.500 2.500H9" fill="none" stroke="#a9a9a9" stroke-width="1.350" stroke-linecap="round"/><path d="M6.500 8 14 .5 16.800 3.300 9.300 10.800 6 11.300z" fill="#a9a9a9"/></svg>
<svg class="b" style="left:637.10px;top:330.30px;" width="8.20" height="8.20" viewBox="0.3 0.3 15.4 15.4" preserveAspectRatio="none"><circle cx="8" cy="8" r="7.700" fill="#0a0a0a"/><path d="M3 7.800 12.500 4 11 12 8.200 10 6.800 11.400 6.600 9z" fill="#fff"/></svg>
<span class="t" style="left:647.70px;top:328.10px;font-size:8.6px;line-height:12.0px;color:#444;letter-spacing:-0.170px;">Телеграм</span>
<div class="b" style="left:738.50px;top:327.90px;width:48.70px;height:12.00px;background:#58b55a"></div>
<span class="t" style="left:745.20px;top:329.55px;font-size:7.5px;line-height:10.5px;color:#fff;letter-spacing:-0.310px;">Решена</span>
<svg class="b" style="left:773.90px;top:331.00px;" width="7.30" height="5.90" viewBox="0 0.3 17 13.7" preserveAspectRatio="none"><path d="M13 8.500V11.500A1.800 1.800 0 0 1 11.200 13.300H2.500A1.800 1.800 0 0 1 .7 11.500V4.300A1.800 1.800 0 0 1 2.500 2.500H9" fill="none" stroke="#fff" stroke-width="1.350" stroke-linecap="round"/><path d="M6.500 8 14 .5 16.800 3.300 9.300 10.800 6 11.300z" fill="#fff"/></svg>
<svg class="b" style="left:824.80px;top:330.10px;" width="7.40" height="7.60" viewBox="0 0 15 15" preserveAspectRatio="none"><path d="M4.300 6.800 9.900 12.400a2.100 2.100 0 0 0 3-3L6.300 2.800a3.050 3.050 0 0 0-4.300 4.300l6.700 6.700" fill="none" stroke="#7f94b3" stroke-width="1.650" stroke-linecap="round"/></svg>
<svg class="b" style="left:839.80px;top:330.30px;" width="8.20" height="7.90" viewBox="0.4 0.4 15.9 15.9" preserveAspectRatio="none"><circle cx="6.800" cy="6.800" r="5.600" fill="none" stroke="#7b99be" stroke-width="1.600"/><path d="M11.200 11.200 15 15" stroke="#7b99be" stroke-width="2.600" stroke-linecap="round"/><path d="M4 6.800H9.600M6.800 4V9.600" stroke="#7b99be" stroke-width="1.500"/></svg>
<div class="b" style="left:72.00px;top:345.93px;width:782.00px;height:23.83px;background:#ffe9e9"></div>
<div class="b" style="left:68.00px;top:345.93px;width:4.00px;height:23.83px;background:#8b9db5"></div>
<div class="b" style="left:92.30px;top:354.13px;width:1.80px;height:4.40px;background:linear-gradient(#f23a2e,#f6602a);border-radius:.3px"></div>
<div class="b" style="left:92.30px;top:359.43px;width:1.80px;height:1.60px;background:#fa7a2c"></div>
<span class="t" style="left:96.60px;top:351.93px;font-size:8.6px;line-height:12.0px;color:#8c9eb7;letter-spacing:-0.280px;transform:scaleX(0.9812);">000257</span>
<span class="t" style="left:158.30px;top:351.93px;font-size:8.6px;line-height:12.0px;color:#222;font-weight:bold;letter-spacing:-0.222px;">Регулярное ТО на оборудован...</span>
<span class="t" style="left:304.00px;top:351.93px;font-size:8.6px;line-height:12.0px;color:#777;letter-spacing:-0.037px;">Игорь Р.</span>
<svg class="b" style="left:339.45px;top:354.03px;" width="8.40" height="7.00" viewBox="0 0.3 17 13.7" preserveAspectRatio="none"><path d="M13 8.500V11.500A1.800 1.800 0 0 1 11.200 13.300H2.500A1.800 1.800 0 0 1 .7 11.500V4.300A1.800 1.800 0 0 1 2.500 2.500H9" fill="none" stroke="#a9a9a9" stroke-width="1.350" stroke-linecap="round"/><path d="M6.500 8 14 .5 16.800 3.300 9.300 10.800 6 11.300z" fill="#a9a9a9"/></svg>
<svg class="b" style="left:442.30px;top:354.88px;" width="5.70" height="5.70" viewBox="0 0 10 10" preserveAspectRatio="none"><circle cx="5" cy="5" r="5" fill="#00ee00"/></svg>
<span class="t" style="left:451.20px;top:351.93px;font-size:8.6px;line-height:12.0px;color:#555;letter-spacing:-0.106px;">Inditex Поволжье</span>
<svg class="b" style="left:521.00px;top:354.03px;" width="8.40" height="7.00" viewBox="0 0.3 17 13.7" preserveAspectRatio="none"><path d="M13 8.500V11.500A1.800 1.800 0 0 1 11.200 13.300H2.500A1.800 1.800 0 0 1 .7 11.500V4.300A1.800 1.800 0 0 1 2.500 2.500H9" fill="none" stroke="#a9a9a9" stroke-width="1.350" stroke-linecap="round"/><path d="M6.500 8 14 .5 16.800 3.300 9.300 10.800 6 11.300z" fill="#a9a9a9"/></svg>
<div class="b" style="left:555.50px;top:350.43px;width:62.00px;height:13.80px;background:rgba(255,255,255,.3);border:1px solid #d0dae6;box-sizing:border-box"></div>
<div class="b" style="left:555.60px;top:350.63px;width:46.35px;height:13.40px;background:#4aa934"></div>
<span class="t" style="left:578.45px;top:352.33px;font-size:8.4px;line-height:11.8px;color:#1f3a18;letter-spacing:-0.280px;transform:scaleX(0.9858);">75%</span>
<svg class="b" style="left:637.60px;top:353.93px;" width="7.50" height="7.20" viewBox="0 0.8 16 14.4" preserveAspectRatio="none"><path d="M2.420 7.510A5.600 5.600 0 0 1 12.850 5.200" fill="none" stroke="#111" stroke-width="2.500"/><path d="M13.580 8.490A5.600 5.600 0 0 1 3.150 10.800" fill="none" stroke="#111" stroke-width="2.500"/><path d="M16 1V7.400H9.600z" fill="#111"/><path d="M0 15V8.600H6.400z" fill="#111"/></svg>
<span class="t" style="left:647.70px;top:351.93px;font-size:8.6px;line-height:12.0px;color:#444;letter-spacing:-0.209px;">Повторяющаяся за...</span>
<div class="b" style="left:738.50px;top:351.73px;width:55.95px;height:12.00px;background:#ffc526"></div>
<span class="t" style="left:745.20px;top:353.38px;font-size:7.5px;line-height:10.5px;color:#fff;letter-spacing:-0.332px;">Отложена</span>
<svg class="b" style="left:780.90px;top:354.83px;" width="7.30" height="5.90" viewBox="0 0.3 17 13.7" preserveAspectRatio="none"><path d="M13 8.500V11.500A1.800 1.800 0 0 1 11.200 13.300H2.500A1.800 1.800 0 0 1 .7 11.500V4.300A1.800 1.800 0 0 1 2.500 2.500H9" fill="none" stroke="#fff" stroke-width="1.350" stroke-linecap="round"/><path d="M6.500 8 14 .5 16.800 3.300 9.300 10.800 6 11.300z" fill="#fff"/></svg>
<svg class="b" style="left:824.80px;top:353.93px;" width="7.40" height="7.60" viewBox="0 0 15 15" preserveAspectRatio="none"><path d="M4.300 6.800 9.900 12.400a2.100 2.100 0 0 0 3-3L6.300 2.800a3.050 3.050 0 0 0-4.300 4.300l6.700 6.700" fill="none" stroke="#7f94b3" stroke-width="1.650" stroke-linecap="round"/></svg>
<svg class="b" style="left:839.80px;top:354.13px;" width="8.20" height="7.90" viewBox="0.4 0.4 15.9 15.9" preserveAspectRatio="none"><circle cx="6.800" cy="6.800" r="5.600" fill="none" stroke="#7b99be" stroke-width="1.600"/><path d="M11.200 11.200 15 15" stroke="#7b99be" stroke-width="2.600" stroke-linecap="round"/><path d="M4 6.800H9.600M6.800 4V9.600" stroke="#7b99be" stroke-width="1.500"/></svg>
<div class="b" style="left:72.00px;top:369.76px;width:782.00px;height:23.83px;background:#ffe9e9"></div>
<div class="b" style="left:68.00px;top:369.76px;width:4.00px;height:23.83px;background:#55b458"></div>
<span class="t" style="left:91.75px;top:375.76px;font-size:8.6px;line-height:12.0px;color:#8c9eb7;letter-spacing:-0.280px;transform:scaleX(0.9812);">000240</span>
<span class="t" style="left:158.30px;top:375.76px;font-size:8.6px;line-height:12.0px;color:#222;font-weight:bold;letter-spacing:-0.076px;">Дублирование позиций в пр...</span>
<span class="t" style="left:304.00px;top:375.76px;font-size:8.6px;line-height:12.0px;color:#555;letter-spacing:-0.126px;">Трей-сервис \ Конюшин ...</span>
<svg class="b" style="left:408.20px;top:376.76px;" width="8.10" height="9.20" viewBox="0.2 0.2 14.6 16.7" preserveAspectRatio="none"><path d="M4.500 10V3.500a1.200 1.200 0 0 1 2.400 0V2a1.200 1.200 0 0 1 2.400 0v.8a1.200 1.200 0 0 1 2.400 0V4.800a1.200 1.200 0 0 1 2.400 0V11c0 3.300-2 5.200-5 5.200-2.500 0-3.700-1-4.800-3L1 10.200c-.6-1.200.9-2.200 1.800-1z" fill="none" stroke="#a9a9a9" stroke-width="1.250" stroke-linejoin="round"/></svg>
<svg class="b" style="left:419.00px;top:377.86px;" width="8.40" height="7.00" viewBox="0 0.3 17 13.7" preserveAspectRatio="none"><path d="M13 8.500V11.500A1.800 1.800 0 0 1 11.200 13.300H2.500A1.800 1.800 0 0 1 .7 11.500V4.300A1.800 1.800 0 0 1 2.500 2.500H9" fill="none" stroke="#a9a9a9" stroke-width="1.350" stroke-linecap="round"/><path d="M6.500 8 14 .5 16.800 3.300 9.300 10.800 6 11.300z" fill="#a9a9a9"/></svg>
<svg class="b" style="left:442.30px;top:378.71px;" width="5.70" height="5.70" viewBox="0 0 10 10" preserveAspectRatio="none"><circle cx="5" cy="5" r="5" fill="#ff0000"/></svg>
<span class="t" style="left:451.20px;top:375.76px;font-size:8.6px;line-height:12.0px;color:#555;letter-spacing:-0.275px;">Риксос Красная П...</span>
<svg class="b" style="left:532.00px;top:377.86px;" width="8.40" height="7.00" viewBox="0 0.3 17 13.7" preserveAspectRatio="none"><path d="M13 8.500V11.500A1.800 1.800 0 0 1 11.200 13.300H2.500A1.800 1.800 0 0 1 .7 11.500V4.300A1.800 1.800 0 0 1 2.500 2.500H9" fill="none" stroke="#a9a9a9" stroke-width="1.350" stroke-linecap="round"/><path d="M6.500 8 14 .5 16.800 3.300 9.300 10.800 6 11.300z" fill="#a9a9a9"/></svg>
<svg class="b" style="left:637.30px;top:377.96px;" width="5.60" height="7.20" viewBox="0.15 0.15 11.7 15.7" preserveAspectRatio="none"><rect x="1" y="1" width="10" height="14" rx="1.800" fill="none" stroke="#3c3c3c" stroke-width="1.700"/><rect x="1" y="11.300" width="10" height="3.700" fill="#3c3c3c"/></svg>
<span class="t" style="left:645.80px;top:375.76px;font-size:8.6px;line-height:12.0px;color:#444;letter-spacing:-0.021px;">Мобильный контакт</span>
<div class="b" style="left:738.50px;top:375.56px;width:48.70px;height:12.00px;background:#58b55a"></div>
<span class="t" style="left:745.20px;top:377.21px;font-size:7.5px;line-height:10.5px;color:#fff;letter-spacing:-0.310px;">Решена</span>
<svg class="b" style="left:773.90px;top:378.66px;" width="7.30" height="5.90" viewBox="0 0.3 17 13.7" preserveAspectRatio="none"><path d="M13 8.500V11.500A1.800 1.800 0 0 1 11.200 13.300H2.500A1.800 1.800 0 0 1 .7 11.500V4.300A1.800 1.800 0 0 1 2.500 2.500H9" fill="none" stroke="#fff" stroke-width="1.350" stroke-linecap="round"/><path d="M6.500 8 14 .5 16.800 3.300 9.300 10.800 6 11.300z" fill="#fff"/></svg>
<svg class="b" style="left:824.80px;top:377.76px;" width="7.40" height="7.60" viewBox="0 0 15 15" preserveAspectRatio="none"><path d="M4.300 6.800 9.900 12.400a2.100 2.100 0 0 0 3-3L6.300 2.800a3.050 3.050 0 0 0-4.300 4.300l6.700 6.700" fill="none" stroke="#7f94b3" stroke-width="1.650" stroke-linecap="round"/></svg>
<svg class="b" style="left:839.80px;top:377.96px;" width="8.20" height="7.90" viewBox="0.4 0.4 15.9 15.9" preserveAspectRatio="none"><circle cx="6.800" cy="6.800" r="5.600" fill="none" stroke="#7b99be" stroke-width="1.600"/><path d="M11.200 11.200 15 15" stroke="#7b99be" stroke-width="2.600" stroke-linecap="round"/><path d="M4 6.800H9.600M6.800 4V9.600" stroke="#7b99be" stroke-width="1.500"/></svg>
<div class="b" style="left:68.00px;top:393.59px;width:4.00px;height:23.83px;background:#e82944"></div>
<span class="t" style="left:91.75px;top:399.59px;font-size:8.6px;line-height:12.0px;color:#8c9eb7;letter-spacing:-0.280px;transform:scaleX(0.9812);">000239</span>
<span class="t" style="left:158.30px;top:399.59px;font-size:8.6px;line-height:12.0px;color:#555;letter-spacing:-0.105px;">Пришёл запрос на интеграцию ...</span>
<span class="t" style="left:304.00px;top:399.59px;font-size:8.6px;line-height:12.0px;color:#555;letter-spacing:-0.175px;">Галушкин П.</span>
<svg class="b" style="left:355.20px;top:400.59px;" width="8.10" height="9.20" viewBox="0.2 0.2 14.6 16.7" preserveAspectRatio="none"><path d="M4.500 10V3.500a1.200 1.200 0 0 1 2.400 0V2a1.200 1.200 0 0 1 2.400 0v.8a1.200 1.200 0 0 1 2.400 0V4.800a1.200 1.200 0 0 1 2.400 0V11c0 3.300-2 5.200-5 5.200-2.500 0-3.700-1-4.800-3L1 10.200c-.6-1.200.9-2.200 1.800-1z" fill="none" stroke="#a9a9a9" stroke-width="1.250" stroke-linejoin="round"/></svg>
<svg class="b" style="left:366.00px;top:401.69px;" width="8.40" height="7.00" viewBox="0 0.3 17 13.7" preserveAspectRatio="none"><path d="M13 8.500V11.500A1.800 1.800 0 0 1 11.200 13.300H2.500A1.800 1.800 0 0 1 .7 11.500V4.300A1.800 1.800 0 0 1 2.500 2.500H9" fill="none" stroke="#a9a9a9" stroke-width="1.350" stroke-linecap="round"/><path d="M6.500 8 14 .5 16.800 3.300 9.300 10.800 6 11.300z" fill="#a9a9a9"/></svg>
<svg class="b" style="left:442.30px;top:402.54px;" width="5.70" height="5.70" viewBox="0 0 10 10" preserveAspectRatio="none"><circle cx="5" cy="5" r="5" fill="#ffe800"/></svg>
<span class="t" style="left:451.20px;top:399.59px;font-size:8.6px;line-height:12.0px;color:#555;letter-spacing:-0.070px;">ГазопроводМонтаж</span>
<svg class="b" style="left:530.50px;top:401.69px;" width="8.40" height="7.00" viewBox="0 0.3 17 13.7" preserveAspectRatio="none"><path d="M13 8.500V11.500A1.800 1.800 0 0 1 11.200 13.300H2.500A1.800 1.800 0 0 1 .7 11.500V4.300A1.800 1.800 0 0 1 2.500 2.500H9" fill="none" stroke="#a9a9a9" stroke-width="1.350" stroke-linecap="round"/><path d="M6.500 8 14 .5 16.800 3.300 9.300 10.800 6 11.300z" fill="#a9a9a9"/></svg>
<svg class="b" style="left:637.30px;top:401.79px;" width="5.60" height="7.20" viewBox="0.15 0.15 11.7 15.7" preserveAspectRatio="none"><rect x="1" y="1" width="10" height="14" rx="1.800" fill="none" stroke="#3c3c3c" stroke-width="1.700"/><rect x="1" y="11.300" width="10" height="3.700" fill="#3c3c3c"/></svg>
<span class="t" style="left:645.80px;top:399.59px;font-size:8.6px;line-height:12.0px;color:#444;letter-spacing:-0.021px;">Мобильный контакт</span>
<div class="b" style="left:738.50px;top:399.39px;width:72.20px;height:12.00px;background:#3cc3ec"></div>
<span class="t" style="left:745.20px;top:401.04px;font-size:7.5px;line-height:10.5px;color:#fff;letter-spacing:-0.312px;">Передано в о...</span>
<svg class="b" style="left:796.90px;top:402.49px;" width="7.30" height="5.90" viewBox="0 0.3 17 13.7" preserveAspectRatio="none"><path d="M13 8.500V11.500A1.800 1.800 0 0 1 11.200 13.300H2.500A1.800 1.800 0 0 1 .7 11.500V4.300A1.800 1.800 0 0 1 2.500 2.500H9" fill="none" stroke="#fff" stroke-width="1.350" stroke-linecap="round"/><path d="M6.500 8 14 .5 16.800 3.300 9.300 10.800 6 11.300z" fill="#fff"/></svg>
<svg class="b" style="left:824.80px;top:401.59px;" width="7.40" height="7.60" viewBox="0 0 15 15" preserveAspectRatio="none"><path d="M4.300 6.800 9.900 12.400a2.100 2.100 0 0 0 3-3L6.300 2.800a3.050 3.050 0 0 0-4.300 4.300l6.700 6.700" fill="none" stroke="#7f94b3" stroke-width="1.650" stroke-linecap="round"/></svg>
<svg class="b" style="left:839.80px;top:401.79px;" width="8.20" height="7.90" viewBox="0.4 0.4 15.9 15.9" preserveAspectRatio="none"><circle cx="6.800" cy="6.800" r="5.600" fill="none" stroke="#7b99be" stroke-width="1.600"/><path d="M11.200 11.200 15 15" stroke="#7b99be" stroke-width="2.600" stroke-linecap="round"/><path d="M4 6.800H9.600M6.800 4V9.600" stroke="#7b99be" stroke-width="1.500"/></svg>
<div class="b" style="left:72.00px;top:417.42px;width:782.00px;height:23.83px;background:#ffe9e9"></div>
<div class="b" style="left:68.00px;top:417.42px;width:4.00px;height:23.83px;background:#e82944"></div>
<div class="b" style="left:92.30px;top:425.62px;width:1.80px;height:4.40px;background:linear-gradient(#f23a2e,#f6602a);border-radius:.3px"></div>
<div class="b" style="left:92.30px;top:430.92px;width:1.80px;height:1.60px;background:#fa7a2c"></div>
<svg class="b" style="left:80.00px;top:425.82px;" width="5.00" height="6.40" viewBox="2 0.5 8.6 13" preserveAspectRatio="none"><path d="M3 1.500 8.500 7 3 12.500" fill="none" stroke="#111" stroke-width="2.800"/></svg>
<span class="t" style="left:96.60px;top:423.42px;font-size:8.6px;line-height:12.0px;color:#8c9eb7;letter-spacing:-0.280px;transform:scaleX(0.9812);">000237</span>
<span class="t" style="left:158.30px;top:423.42px;font-size:8.6px;line-height:12.0px;color:#555;letter-spacing:-0.128px;">Клиент просит помощи 003074...</span>
<span class="t" style="left:304.00px;top:423.42px;font-size:8.6px;line-height:12.0px;color:#555;letter-spacing:-0.164px;">Группа Москва \ Агаев В.</span>
<svg class="b" style="left:403.20px;top:424.42px;" width="8.10" height="9.20" viewBox="0.2 0.2 14.6 16.7" preserveAspectRatio="none"><path d="M4.500 10V3.500a1.200 1.200 0 0 1 2.400 0V2a1.200 1.200 0 0 1 2.400 0v.8a1.200 1.200 0 0 1 2.400 0V4.800a1.200 1.200 0 0 1 2.400 0V11c0 3.300-2 5.200-5 5.200-2.500 0-3.700-1-4.800-3L1 10.200c-.6-1.200.9-2.200 1.800-1z" fill="none" stroke="#a9a9a9" stroke-width="1.250" stroke-linejoin="round"/></svg>
<svg class="b" style="left:414.00px;top:425.52px;" width="8.40" height="7.00" viewBox="0 0.3 17 13.7" preserveAspectRatio="none"><path d="M13 8.500V11.500A1.800 1.800 0 0 1 11.200 13.300H2.500A1.800 1.800 0 0 1 .7 11.500V4.300A1.800 1.800 0 0 1 2.500 2.500H9" fill="none" stroke="#a9a9a9" stroke-width="1.350" stroke-linecap="round"/><path d="M6.500 8 14 .5 16.800 3.300 9.300 10.800 6 11.300z" fill="#a9a9a9"/></svg>
<svg class="b" style="left:442.30px;top:426.37px;" width="5.70" height="5.70" viewBox="0 0 10 10" preserveAspectRatio="none"><circle cx="5" cy="5" r="5" fill="#ff0000"/></svg>
<span class="t" style="left:451.20px;top:423.42px;font-size:8.6px;line-height:12.0px;color:#555;letter-spacing:-0.275px;">Риксос Красная П...</span>
<svg class="b" style="left:532.00px;top:425.52px;" width="8.40" height="7.00" viewBox="0 0.3 17 13.7" preserveAspectRatio="none"><path d="M13 8.500V11.500A1.800 1.800 0 0 1 11.200 13.300H2.500A1.800 1.800 0 0 1 .7 11.500V4.300A1.800 1.800 0 0 1 2.500 2.500H9" fill="none" stroke="#a9a9a9" stroke-width="1.350" stroke-linecap="round"/><path d="M6.500 8 14 .5 16.800 3.300 9.300 10.800 6 11.300z" fill="#a9a9a9"/></svg>
<svg class="b" style="left:637.30px;top:425.92px;" width="8.50" height="6.60" viewBox="0 0 18 13" preserveAspectRatio="none"><rect x=".8" y=".8" width="16.400" height="11.400" rx="1.200" fill="none" stroke="#444" stroke-width="1.600"/><path d="M1.200 2.200 9 8 16.800 2.200" fill="none" stroke="#444" stroke-width="1.600"/></svg>
<span class="t" style="left:648.70px;top:423.42px;font-size:8.6px;line-height:12.0px;color:#444;letter-spacing:-0.135px;">Электронная почта</span>
<div class="b" style="left:738.50px;top:423.22px;width:50.20px;height:12.00px;background:#8b9db5"></div>
<span class="t" style="left:745.20px;top:424.87px;font-size:7.5px;line-height:10.5px;color:#fff;letter-spacing:-0.297px;">Закрыта</span>
<svg class="b" style="left:775.40px;top:426.32px;" width="7.30" height="5.90" viewBox="0 0.3 17 13.7" preserveAspectRatio="none"><path d="M13 8.500V11.500A1.800 1.800 0 0 1 11.200 13.300H2.500A1.800 1.800 0 0 1 .7 11.500V4.300A1.800 1.800 0 0 1 2.500 2.500H9" fill="none" stroke="#fff" stroke-width="1.350" stroke-linecap="round"/><path d="M6.500 8 14 .5 16.800 3.300 9.300 10.800 6 11.300z" fill="#fff"/></svg>
<svg class="b" style="left:839.80px;top:425.62px;" width="8.20" height="7.90" viewBox="0.4 0.4 15.9 15.9" preserveAspectRatio="none"><circle cx="6.800" cy="6.800" r="5.600" fill="none" stroke="#7b99be" stroke-width="1.600"/><path d="M11.200 11.200 15 15" stroke="#7b99be" stroke-width="2.600" stroke-linecap="round"/><path d="M4 6.800H9.600M6.800 4V9.600" stroke="#7b99be" stroke-width="1.500"/></svg>
<div class="b" style="left:72.00px;top:441.25px;width:782.00px;height:23.83px;background:#ffe9e9"></div>
<div class="b" style="left:68.00px;top:441.25px;width:4.00px;height:23.83px;background:#8b9db5"></div>
<div class="b" style="left:92.30px;top:449.45px;width:1.80px;height:4.40px;background:linear-gradient(#f23a2e,#f6602a);border-radius:.3px"></div>
<div class="b" style="left:92.30px;top:454.75px;width:1.80px;height:1.60px;background:#fa7a2c"></div>
<svg class="b" style="left:96.30px;top:449.95px;" width="5.20" height="6.10" viewBox="1 0.8 12 14.7" preserveAspectRatio="none"><rect x="1" y="7" width="12" height="8.500" rx="1" fill="#8b9db5"/><path d="M3.800 7V5a3.200 3.200 0 0 1 6.400 0V7" fill="none" stroke="#8b9db5" stroke-width="2"/></svg>
<span class="t" style="left:103.75px;top:447.25px;font-size:8.6px;line-height:12.0px;color:#8c9eb7;letter-spacing:-0.280px;transform:scaleX(0.9812);">000232</span>
<span class="t" style="left:158.30px;top:447.25px;font-size:8.6px;line-height:12.0px;color:#222;font-weight:bold;letter-spacing:-0.154px;">не работает касса</span>
<span class="t" style="left:304.00px;top:447.25px;font-size:8.6px;line-height:12.0px;color:#555;letter-spacing:-0.049px;">Группа Москва \ Игорь Р.</span>
<svg class="b" style="left:404.70px;top:449.35px;" width="8.40" height="7.00" viewBox="0 0.3 17 13.7" preserveAspectRatio="none"><path d="M13 8.500V11.500A1.800 1.800 0 0 1 11.200 13.300H2.500A1.800 1.800 0 0 1 .7 11.500V4.300A1.800 1.800 0 0 1 2.500 2.500H9" fill="none" stroke="#a9a9a9" stroke-width="1.350" stroke-linecap="round"/><path d="M6.500 8 14 .5 16.800 3.300 9.300 10.800 6 11.300z" fill="#a9a9a9"/></svg>
<svg class="b" style="left:442.30px;top:450.20px;" width="5.70" height="5.70" viewBox="0 0 10 10" preserveAspectRatio="none"><circle cx="5" cy="5" r="5" fill="#ff0000"/></svg>
<span class="t" style="left:451.20px;top:447.25px;font-size:8.6px;line-height:12.0px;color:#555;letter-spacing:-0.188px;">Inditex Москва и С...</span>
<svg class="b" style="left:532.25px;top:449.35px;" width="8.40" height="7.00" viewBox="0 0.3 17 13.7" preserveAspectRatio="none"><path d="M13 8.500V11.500A1.800 1.800 0 0 1 11.200 13.300H2.500A1.800 1.800 0 0 1 .7 11.500V4.300A1.800 1.800 0 0 1 2.500 2.500H9" fill="none" stroke="#a9a9a9" stroke-width="1.350" stroke-linecap="round"/><path d="M6.500 8 14 .5 16.800 3.300 9.300 10.800 6 11.300z" fill="#a9a9a9"/></svg>
<svg class="b" style="left:637.40px;top:449.65px;" width="6.60" height="6.40" viewBox="1 1 14 14" preserveAspectRatio="none"><path d="M3.200 1.200 5.600 1 7 4.400 5.400 5.800C6.300 7.800 8.200 9.700 10.200 10.600L11.600 9 15 10.400 14.800 12.800C14.600 14.200 13.400 15 12 14.800 6.200 14 2 9.800 1.200 4 1 2.600 1.800 1.400 3.200 1.200z" fill="#111"/></svg>
<span class="t" style="left:647.40px;top:447.25px;font-size:8.6px;line-height:12.0px;color:#444;letter-spacing:-0.127px;">Диспетчер</span>
<div class="b" style="left:738.50px;top:447.05px;width:51.50px;height:12.00px;background:#ff8a1f"></div>
<span class="t" style="left:745.20px;top:448.70px;font-size:7.5px;line-height:10.5px;color:#fff;letter-spacing:-0.270px;">Открыта</span>
<svg class="b" style="left:776.15px;top:450.15px;" width="7.30" height="5.90" viewBox="0 0.3 17 13.7" preserveAspectRatio="none"><path d="M13 8.500V11.500A1.800 1.800 0 0 1 11.200 13.300H2.500A1.800 1.800 0 0 1 .7 11.500V4.300A1.800 1.800 0 0 1 2.500 2.500H9" fill="none" stroke="#fff" stroke-width="1.350" stroke-linecap="round"/><path d="M6.500 8 14 .5 16.800 3.300 9.300 10.800 6 11.300z" fill="#fff"/></svg>
<svg class="b" style="left:839.80px;top:449.45px;" width="8.20" height="7.90" viewBox="0.4 0.4 15.9 15.9" preserveAspectRatio="none"><circle cx="6.800" cy="6.800" r="5.600" fill="none" stroke="#7b99be" stroke-width="1.600"/><path d="M11.200 11.200 15 15" stroke="#7b99be" stroke-width="2.600" stroke-linecap="round"/><path d="M4 6.800H9.600M6.800 4V9.600" stroke="#7b99be" stroke-width="1.500"/></svg>
<div class="b" style="left:72.00px;top:465.08px;width:782.00px;height:23.83px;background:#ffe9e9"></div>
<div class="b" style="left:68.00px;top:465.08px;width:4.00px;height:23.83px;background:#8b9db5"></div>
<div class="b" style="left:92.30px;top:473.28px;width:1.80px;height:4.40px;background:linear-gradient(#f23a2e,#f6602a);border-radius:.3px"></div>
<div class="b" style="left:92.30px;top:478.58px;width:1.80px;height:1.60px;background:#fa7a2c"></div>
<span class="t" style="left:96.60px;top:471.08px;font-size:8.6px;line-height:12.0px;color:#8c9eb7;letter-spacing:-0.280px;transform:scaleX(0.9812);">000231</span>
<span class="t" style="left:158.30px;top:471.08px;font-size:8.6px;line-height:12.0px;color:#222;font-weight:bold;letter-spacing:-0.210px;">Счёт на Профи 6 мес. + МК</span>
<span class="t" style="left:304.00px;top:471.08px;font-size:8.6px;line-height:12.0px;color:#555;letter-spacing:-0.111px;">Бухгалтерия \ Конюшин ...</span>
<svg class="b" style="left:408.70px;top:472.08px;" width="8.10" height="9.20" viewBox="0.2 0.2 14.6 16.7" preserveAspectRatio="none"><path d="M4.500 10V3.500a1.200 1.200 0 0 1 2.400 0V2a1.200 1.200 0 0 1 2.400 0v.8a1.200 1.200 0 0 1 2.400 0V4.800a1.200 1.200 0 0 1 2.400 0V11c0 3.300-2 5.200-5 5.200-2.500 0-3.700-1-4.800-3L1 10.200c-.6-1.200.9-2.200 1.800-1z" fill="none" stroke="#a9a9a9" stroke-width="1.250" stroke-linejoin="round"/></svg>
<svg class="b" style="left:419.50px;top:473.18px;" width="8.40" height="7.00" viewBox="0 0.3 17 13.7" preserveAspectRatio="none"><path d="M13 8.500V11.500A1.800 1.800 0 0 1 11.200 13.300H2.500A1.800 1.800 0 0 1 .7 11.500V4.300A1.800 1.800 0 0 1 2.500 2.500H9" fill="none" stroke="#a9a9a9" stroke-width="1.350" stroke-linecap="round"/><path d="M6.500 8 14 .5 16.800 3.300 9.300 10.800 6 11.300z" fill="#a9a9a9"/></svg>
<svg class="b" style="left:442.30px;top:474.03px;" width="5.70" height="5.70" viewBox="0 0 10 10" preserveAspectRatio="none"><circle cx="5" cy="5" r="5" fill="#00ee00"/></svg>
<span class="t" style="left:451.20px;top:471.08px;font-size:8.6px;line-height:12.0px;color:#555;letter-spacing:-0.224px;">ЗАО "Берингов бе...</span>
<svg class="b" style="left:532.00px;top:473.18px;" width="8.40" height="7.00" viewBox="0 0.3 17 13.7" preserveAspectRatio="none"><path d="M13 8.500V11.500A1.800 1.800 0 0 1 11.200 13.300H2.500A1.800 1.800 0 0 1 .7 11.500V4.300A1.800 1.800 0 0 1 2.500 2.500H9" fill="none" stroke="#a9a9a9" stroke-width="1.350" stroke-linecap="round"/><path d="M6.500 8 14 .5 16.800 3.300 9.300 10.800 6 11.300z" fill="#a9a9a9"/></svg>
<svg class="b" style="left:637.40px;top:473.48px;" width="6.60" height="6.40" viewBox="1 1 14 14" preserveAspectRatio="none"><path d="M3.200 1.200 5.600 1 7 4.400 5.400 5.800C6.300 7.800 8.200 9.700 10.200 10.600L11.600 9 15 10.400 14.800 12.800C14.600 14.200 13.400 15 12 14.800 6.200 14 2 9.800 1.200 4 1 2.600 1.800 1.400 3.200 1.200z" fill="#111"/></svg>
<span class="t" style="left:647.40px;top:471.08px;font-size:8.6px;line-height:12.0px;color:#444;letter-spacing:-0.127px;">Диспетчер</span>
<div class="b" style="left:738.50px;top:470.88px;width:72.95px;height:12.00px;background:#a535d2"></div>
<span class="t" style="left:745.20px;top:472.53px;font-size:7.5px;line-height:10.5px;color:#fff;letter-spacing:-0.185px;">Контроль кач...</span>
<svg class="b" style="left:797.90px;top:473.98px;" width="7.30" height="5.90" viewBox="0 0.3 17 13.7" preserveAspectRatio="none"><path d="M13 8.500V11.500A1.800 1.800 0 0 1 11.200 13.300H2.500A1.800 1.800 0 0 1 .7 11.500V4.300A1.800 1.800 0 0 1 2.500 2.500H9" fill="none" stroke="#fff" stroke-width="1.350" stroke-linecap="round"/><path d="M6.500 8 14 .5 16.800 3.300 9.300 10.800 6 11.300z" fill="#fff"/></svg>
<svg class="b" style="left:824.80px;top:473.08px;" width="7.40" height="7.60" viewBox="0 0 15 15" preserveAspectRatio="none"><path d="M4.300 6.800 9.900 12.400a2.100 2.100 0 0 0 3-3L6.300 2.800a3.050 3.050 0 0 0-4.300 4.300l6.700 6.700" fill="none" stroke="#7f94b3" stroke-width="1.650" stroke-linecap="round"/></svg>
<svg class="b" style="left:839.80px;top:473.28px;" width="8.20" height="7.90" viewBox="0.4 0.4 15.9 15.9" preserveAspectRatio="none"><circle cx="6.800" cy="6.800" r="5.600" fill="none" stroke="#7b99be" stroke-width="1.600"/><path d="M11.200 11.200 15 15" stroke="#7b99be" stroke-width="2.600" stroke-linecap="round"/><path d="M4 6.800H9.600M6.800 4V9.600" stroke="#7b99be" stroke-width="1.500"/></svg>
<div class="b" style="left:68.00px;top:488.91px;width:4.00px;height:2.09px;background:#e82944"></div>
<svg class="b" style="left:0;top:0" width="856" height="491" viewBox="0 0 856 491"><rect x="72" y="107.23" width="781.5" height="1" fill="#e1e6ee"/><rect x="68" y="107.23" width="4" height="1" fill="#e1e6ee" opacity=".55"/><rect x="72" y="131.06" width="781.5" height="1" fill="#e1e6ee"/><rect x="68" y="131.06" width="4" height="1" fill="#e1e6ee" opacity=".55"/><rect x="72" y="154.89" width="781.5" height="1" fill="#e1e6ee"/><rect x="68" y="154.89" width="4" height="1" fill="#e1e6ee" opacity=".55"/><rect x="72" y="178.72" width="781.5" height="1" fill="#e1e6ee"/><rect x="68" y="178.72" width="4" height="1" fill="#e1e6ee" opacity=".55"/><rect x="72" y="202.55" width="781.5" height="1" fill="#e1e6ee"/><rect x="68" y="202.55" width="4" height="1" fill="#e1e6ee" opacity=".55"/><rect x="72" y="226.38" width="781.5" height="1" fill="#e1e6ee"/><rect x="68" y="226.38" width="4" height="1" fill="#e1e6ee" opacity=".55"/><rect x="72" y="250.21" width="781.5" height="1" fill="#e1e6ee"/><rect x="68" y="250.21" width="4" height="1" fill="#e1e6ee" opacity=".55"/><rect x="72" y="274.04" width="781.5" height="1" fill="#e1e6ee"/><rect x="68" y="274.04" width="4" height="1" fill="#e1e6ee" opacity=".55"/><rect x="72" y="297.87" width="781.5" height="1" fill="#e1e6ee"/><rect x="68" y="297.87" width="4" height="1" fill="#e1e6ee" opacity=".55"/><rect x="72" y="321.70" width="781.5" height="1" fill="#e1e6ee"/><rect x="68" y="321.70" width="4" height="1" fill="#e1e6ee" opacity=".55"/><rect x="72" y="345.53" width="781.5" height="1" fill="#e1e6ee"/><rect x="68" y="345.53" width="4" height="1" fill="#e1e6ee" opacity=".55"/><rect x="72" y="369.36" width="781.5" height="1" fill="#e1e6ee"/><rect x="68" y="369.36" width="4" height="1" fill="#e1e6ee" opacity=".55"/><rect x="72" y="393.19" width="781.5" height="1" fill="#e1e6ee"/><rect x="68" y="393.19" width="4" height="1" fill="#e1e6ee" opacity=".55"/><rect x="72" y="417.02" width="781.5" height="1" fill="#e1e6ee"/><rect x="68" y="417.02" width="4" height="1" fill="#e1e6ee" opacity=".55"/><rect x="72" y="440.85" width="781.5" height="1" fill="#e1e6ee"/><rect x="68" y="440.85" width="4" height="1" fill="#e1e6ee" opacity=".55"/><rect x="72" y="464.68" width="781.5" height="1" fill="#e1e6ee"/><rect x="68" y="464.68" width="4" height="1" fill="#e1e6ee" opacity=".55"/><rect x="72" y="488.51" width="781.5" height="1" fill="#e1e6ee"/><rect x="68" y="488.51" width="4" height="1" fill="#e1e6ee" opacity=".55"/></svg>
<div class="b" style="left:83.00px;top:202.95px;width:1.00px;height:35.43px;border-left:1px dotted #b3b8bf;width:0"></div>
<div class="b" style="left:83.00px;top:214.55px;width:16.50px;height:1.00px;border-top:1px dotted #d2d6dc;height:0"></div>
<div class="b" style="left:83.00px;top:238.38px;width:7.00px;height:1.00px;border-top:1px dotted #d2d6dc;height:0"></div>
<div class="b" style="left:95.00px;top:250.61px;width:1.00px;height:11.60px;border-left:1px dotted #b3b8bf;width:0"></div>
<div class="b" style="left:95.00px;top:262.21px;width:15.00px;height:1.00px;border-top:1px dotted #d2d6dc;height:0"></div>
<div class="b" style="left:749.00px;top:412.00px;width:62.00px;height:49.50px;background:#fbfbfb"></div>
<div class="b" style="left:749.00px;top:412.00px;width:62.00px;height:16.30px;background:#ff8a1f"></div>
<div class="b" style="left:749.00px;top:429.00px;width:62.00px;height:16.00px;background:#58b55a"></div>
<div class="b" style="left:749.00px;top:446.00px;width:62.00px;height:15.50px;background:#000"></div>
<span class="t" style="left:771.80px;top:413.85px;font-size:8.9px;line-height:12.5px;color:#fff;letter-spacing:-0.266px;">Открыть</span>
<span class="t" style="left:775.80px;top:430.85px;font-size:8.9px;line-height:12.5px;color:#fff;letter-spacing:-0.280px;transform:scaleX(0.9812);">Решить</span>
<span class="t" style="left:773.30px;top:447.65px;font-size:8.9px;line-height:12.5px;color:#fff;letter-spacing:-0.280px;transform:scaleX(0.9865);">Удалить</span>
<div class="b" style="left:0.00px;top:489.40px;width:856.00px;height:1.60px;background:#fff"></div>
</body></html>
